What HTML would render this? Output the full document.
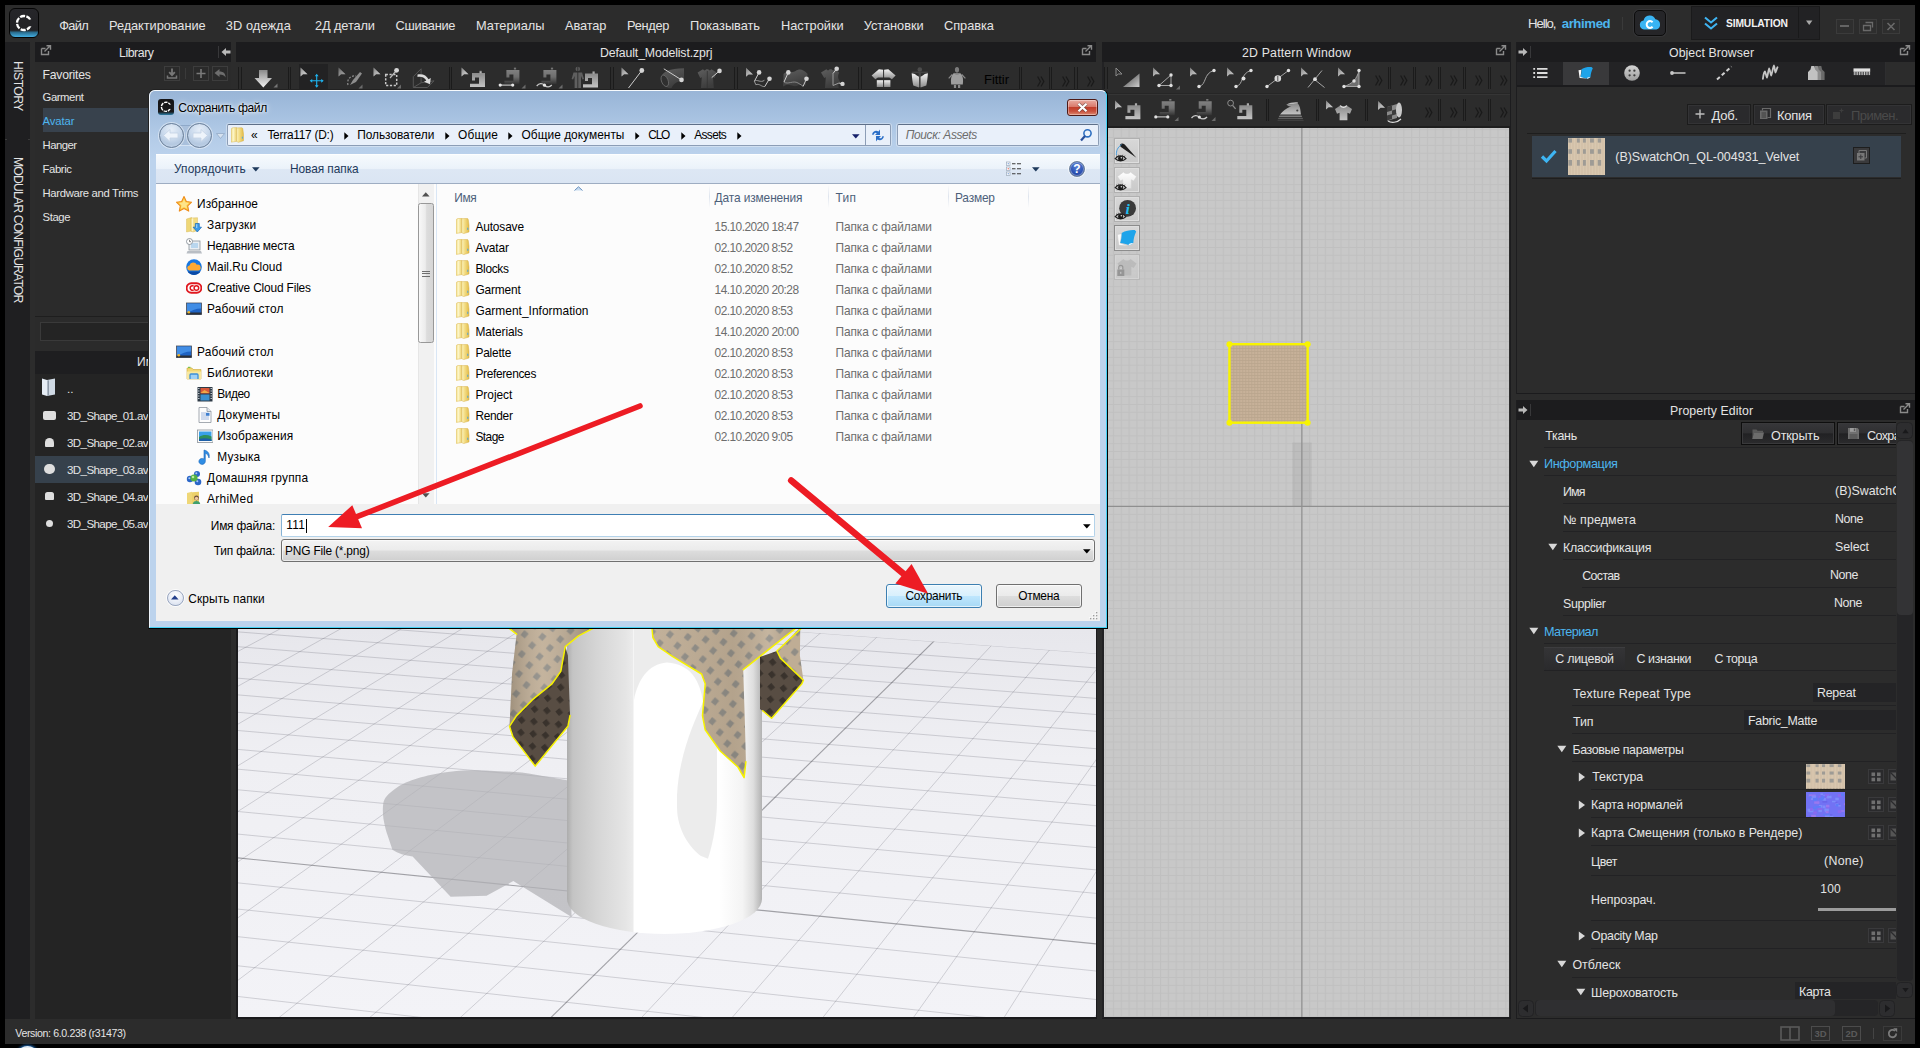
<!DOCTYPE html>
<html lang="ru"><head><meta charset="utf-8"><title>CLO - Сохранить файл</title><style>
html,body{margin:0;padding:0;background:#000;}
body{width:1920px;height:1048px;position:relative;overflow:hidden;font-family:"Liberation Sans","DejaVu Sans",sans-serif;-webkit-font-smoothing:antialiased;}
.t{position:absolute;white-space:nowrap;}
.r{position:absolute;}
svg{display:block;overflow:hidden}
</style></head>
<body>
<svg class="r" width="0" height="0" style="left:0;top:0"><defs><linearGradient id="gcur" x1="0" y1="0" x2="1" y2="1"><stop offset="0" stop-color="#000" stop-opacity="0.35"/><stop offset="0.6" stop-color="#fff" stop-opacity="0.15"/><stop offset="1" stop-color="#fff" stop-opacity="0.35"/></linearGradient><linearGradient id="gm1" x1="0" y1="0" x2="0" y2="1"><stop offset="0" stop-color="#8a8a8a"/><stop offset="1" stop-color="#c4c4c4"/></linearGradient><linearGradient id="gm2" x1="0" y1="0" x2="0" y2="1"><stop offset="0" stop-color="#808080"/><stop offset="0.5" stop-color="#6e6e6e"/><stop offset="1" stop-color="#6e6e6e" stop-opacity="0.12"/></linearGradient><linearGradient id="gdk" x1="0" y1="0" x2="0.4" y2="1"><stop offset="0" stop-color="#5e5e5e"/><stop offset="1" stop-color="#3c3c3c"/></linearGradient></defs></svg><div class="r" style="left:5px;top:5px;width:1910px;height:1039px;background:#2c2c2c;"></div><div class="r" style="left:9px;top:8px;width:28px;height:28px;border:1px solid #050505;border-radius:6px;background:linear-gradient(#26262a 0,#222225 76%,#2b6f92 84%,#43aee0 100%);"></div><svg class="r" style="left:14px;top:13px;" width="20" height="20"><circle cx="10" cy="10" r="7" fill="none" stroke="#fff" stroke-width="2.3" stroke-dasharray="5.2 1.3" stroke-dashoffset="-9.2" /><rect x="13" y="6.7" width="8" height="6.6" fill="#232326"/></svg><div class="t" style="left:59.3px;top:15.5px;height:20px;line-height:20px;font-size:12.8px;color:#e4e4e4;letter-spacing:-0.656px;">Файл</div><div class="t" style="left:109px;top:15.5px;height:20px;line-height:20px;font-size:12.8px;color:#e4e4e4;letter-spacing:-0.07px;">Редактирование</div><div class="t" style="left:225.8px;top:15.5px;height:20px;line-height:20px;font-size:12.8px;color:#e4e4e4;letter-spacing:0.081px;">3D одежда</div><div class="t" style="left:315px;top:15.5px;height:20px;line-height:20px;font-size:12.8px;color:#e4e4e4;letter-spacing:-0.121px;">2Д детали</div><div class="t" style="left:395.5px;top:15.5px;height:20px;line-height:20px;font-size:12.8px;color:#e4e4e4;letter-spacing:-0.254px;">Сшивание</div><div class="t" style="left:476px;top:15.5px;height:20px;line-height:20px;font-size:12.8px;color:#e4e4e4;letter-spacing:-0.005px;">Материалы</div><div class="t" style="left:565px;top:15.5px;height:20px;line-height:20px;font-size:12.8px;color:#e4e4e4;letter-spacing:-0.098px;">Аватар</div><div class="t" style="left:627px;top:15.5px;height:20px;line-height:20px;font-size:12.8px;color:#e4e4e4;letter-spacing:-0.274px;">Рендер</div><div class="t" style="left:690px;top:15.5px;height:20px;line-height:20px;font-size:12.8px;color:#e4e4e4;letter-spacing:-0.03px;">Показывать</div><div class="t" style="left:781px;top:15.5px;height:20px;line-height:20px;font-size:12.8px;color:#e4e4e4;letter-spacing:-0.008px;">Настройки</div><div class="t" style="left:863.7px;top:15.5px;height:20px;line-height:20px;font-size:12.8px;color:#e4e4e4;letter-spacing:-0.031px;">Установки</div><div class="t" style="left:944px;top:15.5px;height:20px;line-height:20px;font-size:12.8px;color:#e4e4e4;letter-spacing:-0.036px;">Справка</div><div class="t" style="left:1528px;top:13.5px;height:20px;line-height:20px;font-size:13.2px;color:#e4e4e4;letter-spacing:-1.05px;">Hello,</div><div class="t" style="left:1561.7px;top:13.5px;height:20px;line-height:20px;font-size:13.2px;color:#4db5ee;letter-spacing:-0.392px;font-weight:bold;">arhimed</div><div class="r" style="left:1621.5px;top:17px;width:1px;height:13px;background:#3a3a3a;"></div><div class="r" style="left:1634px;top:10px;width:30px;height:24px;border:1px solid #0c0c0c;border-radius:5px;background:#252528;box-shadow:0 0 0 1px #343436"></div><svg class="r" style="left:1638px;top:13px;" width="24" height="20"><path d="M6 16.5a4.6 4.6 0 0 1-.4-9.1 6.2 6.2 0 0 1 11.8-1.2 5.3 5.3 0 0 1 1 10.3z" fill="#39b4f3"/><path d="M14.6 9.2a3.4 3.4 0 1 0 0 4.6" fill="none" stroke="#fff" stroke-width="2"/></svg><div class="r" style="left:1691px;top:6px;width:129px;height:33.5px;border:1px solid #1a1a1b;background:#222224;box-sizing:border-box"></div><div class="r" style="left:1798px;top:7px;width:1px;height:31px;background:#19191a;"></div><svg class="r" style="left:1702px;top:14px;" width="18" height="18"><path d="M3 3.5l6 5 6-5M3 9.5l6 5 6-5" fill="none" stroke="#3fb4f2" stroke-width="2.1"/></svg><div class="t" style="left:1726px;top:13.5px;height:20px;line-height:20px;font-size:10.3px;color:#f2f2f2;letter-spacing:-0.147px;font-weight:bold;">SIMULATION</div><svg class="r" style="left:1804px;top:20px;" width="10" height="6"><path d="M2 0.5h6.4l-3.2 4.5z" fill="#a8a8a8"/></svg><div class="r" style="left:1836px;top:19px;width:16px;height:13px;border:1px solid #3b3b3b;background:#2e2e2e"></div><div class="r" style="left:1859px;top:19px;width:16px;height:13px;border:1px solid #3b3b3b;background:#2e2e2e"></div><div class="r" style="left:1882px;top:19px;width:16px;height:13px;border:1px solid #3b3b3b;background:#2e2e2e"></div><div class="r" style="left:1840px;top:25px;width:9px;height:1.6px;background:#646464;"></div><svg class="r" style="left:1862px;top:21px;" width="12" height="11"><path d="M3.5 1.5h7v5M1.5 4.5h7v5h-7z" fill="none" stroke="#6a6a6a" stroke-width="1.3"/></svg><svg class="r" style="left:1885px;top:21px;" width="12" height="11"><path d="M2.5 2l7 7M9.5 2l-7 7" fill="none" stroke="#6a6a6a" stroke-width="1.6"/></svg><div class="r" style="left:5px;top:42px;width:25px;height:977px;background:#1f1f21;"></div><div class="r" style="left:5px;top:138.5px;width:2px;height:1.5px;background:#3a3a3a;"></div><div class="r" style="left:28px;top:138.5px;width:2px;height:1.5px;background:#3a3a3a;"></div><div class="t" style="left:8px;top:61.4px;width:20px;height:52px;writing-mode:vertical-rl;line-height:20px;font-size:12.2px;color:#e4e4e4;letter-spacing:-0.548px">HISTORY</div><div class="t" style="left:8px;top:156.8px;width:20px;height:150px;writing-mode:vertical-rl;line-height:20px;font-size:12.2px;color:#e4e4e4;letter-spacing:-0.828px">MODULAR CONFIGURATOR</div><div class="r" style="left:35px;top:42px;width:196px;height:977px;background:#252525;"></div><div class="r" style="left:35px;top:42px;width:196px;height:20px;background:#1c1c1e;"></div><svg class="r" style="left:40px;top:45px;" width="12" height="11"><path d="M1.5 3.5h4M1.5 3.5v6h7v-3.5" fill="none" stroke="#8a8a8a" stroke-width="1.4"/><path d="M4.5 6.5L10 1M6.5 0.8h4v4" fill="none" stroke="#8a8a8a" stroke-width="1.4"/></svg><div class="t" style="left:119px;top:42.5px;height:20px;line-height:20px;font-size:12.3px;color:#e4e4e4;letter-spacing:-0.433px;">Library</div><div class="r" style="left:218px;top:46px;width:1px;height:12px;background:#38383a;"></div><svg class="r" style="left:221px;top:47px;" width="10" height="10"><path d="M0.5 5l4.5-4v2.4h4.5v3.2h-4.5v2.4z" fill="#b9b9b9"/></svg><div class="r" style="left:35px;top:62px;width:196px;height:254px;background:#2b2b2b;"></div><div class="r" style="left:43px;top:108px;width:188px;height:24px;background:#38424d;"></div><div class="t" style="left:42.5px;top:64.5px;height:20px;line-height:20px;font-size:12.2px;color:#e4e4e4;letter-spacing:-0.209px;">Favorites</div><div class="t" style="left:42.5px;top:86.8px;height:20px;line-height:20px;font-size:11.3px;color:#e4e4e4;letter-spacing:-0.41px;">Garment</div><div class="t" style="left:42.5px;top:111px;height:20px;line-height:20px;font-size:11.3px;color:#4db5ee;letter-spacing:-0.091px;">Avatar</div><div class="t" style="left:42.5px;top:135px;height:20px;line-height:20px;font-size:11.3px;color:#e4e4e4;letter-spacing:-0.513px;">Hanger</div><div class="t" style="left:42.5px;top:159px;height:20px;line-height:20px;font-size:11.3px;color:#e4e4e4;letter-spacing:-0.379px;">Fabric</div><div class="t" style="left:42.5px;top:183px;height:20px;line-height:20px;font-size:11.3px;color:#e4e4e4;letter-spacing:-0.337px;">Hardware and Trims</div><div class="t" style="left:42.5px;top:207px;height:20px;line-height:20px;font-size:11.3px;color:#e4e4e4;letter-spacing:-0.383px;">Stage</div><div class="r" style="left:164px;top:66px;width:16px;height:15px;border:1px solid #3d3d3d;background:#2a2a2a;box-sizing:border-box"></div><div class="r" style="left:193px;top:66px;width:16px;height:15px;border:1px solid #3d3d3d;background:#2a2a2a;box-sizing:border-box"></div><div class="r" style="left:212px;top:66px;width:16px;height:15px;border:1px solid #3d3d3d;background:#2a2a2a;box-sizing:border-box"></div><div class="r" style="left:185px;top:68px;width:1px;height:11px;background:#3a3a3a;"></div><svg class="r" style="left:164px;top:66px;" width="16" height="15"><path d="M8 2.5v6M5.2 6.2L8 9.2l2.8-3" fill="none" stroke="#777" stroke-width="1.8"/><path d="M3.5 9.5v2.6h9V9.5" fill="none" stroke="#777" stroke-width="1.5"/></svg><svg class="r" style="left:193px;top:66px;" width="16" height="15"><path d="M8 3v9M3.5 7.5h9" fill="none" stroke="#7a7a7a" stroke-width="1.6"/></svg><svg class="r" style="left:212px;top:66px;" width="16" height="15"><path d="M2.5 7l5-4v2.5c4 0 6 2 6 6-1.2-2.3-3-3-6-3V11z" fill="#6e6e6e"/></svg><div class="r" style="left:35px;top:316px;width:196px;height:1px;background:#1e1e1e;"></div><div class="r" style="left:35px;top:317px;width:196px;height:34px;background:#2b2b2b;"></div><div class="r" style="left:40px;top:322px;width:110px;height:19px;border:1px solid #3a3a3a;background:#242424;box-sizing:border-box"></div><div class="r" style="left:35px;top:351px;width:196px;height:22.5px;background:#1e1e20;"></div><div class="t" style="left:137px;top:352px;height:20px;line-height:20px;font-size:12px;color:#e4e4e4;">Им</div><div class="r" style="left:35px;top:373.5px;width:196px;height:646px;background:#242424;"></div><div class="r" style="left:35px;top:455.7px;width:196px;height:27px;background:#36414c;"></div><div class="t" style="left:67px;top:378.5px;height:20px;line-height:20px;font-size:11.6px;color:#e4e4e4;">..</div><div class="t" style="left:67px;top:406.1px;height:20px;line-height:20px;font-size:11.6px;color:#e4e4e4;letter-spacing:-0.62px;">3D_Shape_01.av</div><div class="t" style="left:67px;top:433.1px;height:20px;line-height:20px;font-size:11.6px;color:#e4e4e4;letter-spacing:-0.62px;">3D_Shape_02.av</div><div class="t" style="left:67px;top:460.1px;height:20px;line-height:20px;font-size:11.6px;color:#e4e4e4;letter-spacing:-0.62px;">3D_Shape_03.av</div><div class="t" style="left:67px;top:487.1px;height:20px;line-height:20px;font-size:11.6px;color:#e4e4e4;letter-spacing:-0.62px;">3D_Shape_04.av</div><div class="t" style="left:67px;top:514.1px;height:20px;line-height:20px;font-size:11.6px;color:#e4e4e4;letter-spacing:-0.62px;">3D_Shape_05.av</div><svg class="r" style="left:41px;top:377px;" width="18" height="22"><path d="M1 1.5l5 1.5v16L1 17.5z" fill="#e6edf5"/><path d="M6 3L14 1.5v16L6 19z" fill="#cfd9e4"/><path d="M6.5 3.5l1.5-.300v15.3l-1.5.400z" fill="#8e9aa8"/></svg><div class="r" style="left:43px;top:410.5px;width:12.5px;height:9.5px;background:#dedede;border-radius:2px"></div><div class="r" style="left:44.5px;top:437.5px;width:9.5px;height:9px;background:#dedede;border-radius:4.5px 4.5px 1px 1px"></div><div class="r" style="left:44px;top:463.5px;width:10.5px;height:10.5px;background:#dedede;border-radius:6px"></div><div class="r" style="left:44.5px;top:491.5px;width:9.5px;height:8.5px;background:#dedede;border-radius:2.5px 2.5px 1px 1px"></div><div class="r" style="left:45.5px;top:520px;width:7px;height:7px;background:#dedede;border-radius:4px"></div><div class="r" style="left:5px;top:1019px;width:1910px;height:25px;background:#2c2c2c;"></div><div class="t" style="left:15.3px;top:1022.5px;height:20px;line-height:20px;font-size:10.6px;color:#e4e4e4;letter-spacing:-0.368px;">Version: 6.0.238 (r31473)</div><div class="r" style="left:18.5px;top:1045.6px;width:17.5px;height:12px;border-radius:9px / 6px;background:#e3ebf2;box-shadow:0 0 2.5px 1px #1f6ab4"></div><svg class="r" style="left:1780px;top:1026px;" width="20" height="15"><rect x="1" y="1" width="18" height="13" fill="none" stroke="#5a5a5a" stroke-width="1.6"/><path d="M10 1v13" stroke="#5a5a5a" stroke-width="1.6"/></svg><div class="r" style="left:1811px;top:1026px;width:19px;height:15px;border:1.5px solid #4c4c4c;box-sizing:border-box"></div><div class="t" style="left:1814.4px;top:1023.6px;height:20px;line-height:20px;font-size:9.5px;color:#5a5a5a;font-weight:bold;">3D</div><div class="r" style="left:1842px;top:1026px;width:19px;height:15px;border:1.5px solid #4c4c4c;box-sizing:border-box"></div><div class="t" style="left:1845.4px;top:1023.6px;height:20px;line-height:20px;font-size:9.5px;color:#5a5a5a;font-weight:bold;">2D</div><div class="r" style="left:1872.5px;top:1028px;width:1px;height:11px;background:#444;"></div><div class="r" style="left:1883px;top:1026px;width:19px;height:15px;border:1px solid #3b3b3b;box-sizing:border-box;background:#2a2a2a"></div><svg class="r" style="left:1886px;top:1027px;" width="13" height="13"><path d="M10.2 6.5a3.7 3.7 0 1 1-1.2-2.7" fill="none" stroke="#7c7c7c" stroke-width="1.8"/><path d="M7.2 1.2h4v4z" fill="#7c7c7c"/></svg><div class="r" style="left:236px;top:42px;width:860px;height:20px;background:#1c1c1e;"></div><div class="t" style="left:600px;top:42.5px;height:20px;line-height:20px;font-size:12.3px;color:#e4e4e4;letter-spacing:-0.118px;">Default_Modelist.zprj</div><svg class="r" style="left:1081px;top:45px;" width="12" height="11"><path d="M1.5 3.5h4M1.5 3.5v6h7v-3.5" fill="none" stroke="#8a8a8a" stroke-width="1.4"/><path d="M4.5 6.5L10 1M6.5 0.8h4v4" fill="none" stroke="#8a8a8a" stroke-width="1.4"/></svg><div class="r" style="left:236px;top:62px;width:860px;height:30px;background:#2c2c2c;"></div><div class="r" style="left:238.3px;top:67px;width:1.1px;height:22px;background:#1b1b1b;"></div><div class="r" style="left:240.60000000000002px;top:67px;width:1.1px;height:22px;background:#1b1b1b;"></div><svg class="r" style="left:252px;top:66px;" width="28" height="24"><defs><linearGradient id="ga" x1="0" y1="0" x2="0" y2="1"><stop offset="0" stop-color="#8a8a8a"/><stop offset="1" stop-color="#f4f4f4"/></linearGradient></defs><path d="M7 4h8.5v8h4.5l-8.7 9.5L2.5 12H7z" fill="url(#ga)"/><path d="M25.5 17.5v4h-4z" fill="#777"/></svg><div class="r" style="left:287.8px;top:67px;width:1.1px;height:22px;background:#1b1b1b;"></div><div class="r" style="left:290.1px;top:67px;width:1.1px;height:22px;background:#1b1b1b;"></div><div class="r" style="left:298.5px;top:64px;width:29px;height:26px;background:#222223;"></div><svg class="r" style="left:298px;top:64px;" width="30" height="26"><path d="M2.5 3.5l0 9 2.6-2.2 4.4 0z" fill="#b5b5b5"/><path d="M2.5 3.5l0 9 2.6-2.2 4.4 0z" fill="url(#gcur)"/><path d="M18.7 11v11.6M12.9 16.8h11.6" stroke="#1eb4f0" stroke-width="1.1"/><path d="M18.7 9.8l1.9 2.5h-3.8zM18.7 23.8l1.9-2.5h-3.8zM11.7 16.8l2.5-1.9v3.8zM25.7 16.8l-2.5-1.9v3.8z" fill="#1eb4f0"/></svg><svg class="r" style="left:336px;top:64px;" width="30" height="26"><path d="M2.5 3.5l0 9 2.6-2.2 4.4 0z" fill="#7d7d7d"/><path d="M2.5 3.5l0 9 2.6-2.2 4.4 0z" fill="url(#gcur)"/><path d="M12 21c-1.5-6 3-10 8-9" fill="none" stroke="#8a8a8a" stroke-width="1.3" stroke-dasharray="2 1.5"/><path d="M14 21l3-5 7-8 2 1.5-6 8.5z" fill="#8d8d8d"/><path d="M26.5 20.5v4h-4z" fill="#6a6a6a"/></svg><svg class="r" style="left:371px;top:64px;" width="32" height="26"><path d="M2.5 3.5l0 9 2.6-2.2 4.4 0z" fill="#a8a8a8"/><path d="M2.5 3.5l0 9 2.6-2.2 4.4 0z" fill="url(#gcur)"/><rect x="14.7" y="10.5" width="11" height="11" fill="none" stroke="#c9c9c9" stroke-width="1.5" stroke-dasharray="2.2 1.6"/><path d="M19 14l6-7" stroke="#bbb" stroke-width="1.2"/><circle cx="25.6" cy="6.3" r="2.4" fill="#d8d8d8"/><path d="M30 20.5v4h-4z" fill="#6a6a6a"/></svg><svg class="r" style="left:411px;top:64px;" width="28" height="26"><path d="M10.1 4.8L2.3 12.6V23.5H16.3L23.1 16.8M10.1 4.8V18.8L23.1 16.8M10.1 18.8L2.3 23.5" fill="none" stroke="#565656" stroke-width="1"/><path d="M6.5 10.5c5-1.2 9 .800 11 4.8l2.3-1.2-.800 6.2-6-2.6 2.3-1.2c-1.5-2.8-4.5-4.2-8.8-3.5z" fill="#dcdcdc"/></svg><div class="r" style="left:448.7px;top:67px;width:1.1px;height:22px;background:#1b1b1b;"></div><div class="r" style="left:451px;top:67px;width:1.1px;height:22px;background:#1b1b1b;"></div><svg class="r" style="left:459px;top:64px;" width="30" height="26"><path d="M2.5 3.5l0 9 2.6-2.2 4.4 0z" fill="#b0b0b0"/><path d="M2.5 3.5l0 9 2.6-2.2 4.4 0z" fill="url(#gcur)"/><path d="M13 9h13v14h-15v-3.2h9v-6.3h-4v3h-3z" fill="url(#gm1)"/><rect x="20.5" y="6.8" width="2.2" height="2.4" fill="url(#gm1)"/></svg><svg class="r" style="left:497px;top:64px;" width="32" height="26"><path d="M9.4 5.9h13v14h-15v-3.2h9v-6.3h-4v3h-3z" fill="url(#gm2)"/><rect x="16.9" y="3.7" width="2.2" height="2.4" fill="url(#gm2)"/><path d="M3.2 21.1h12.5" stroke="#cfcfcf" stroke-width="1.1"/><circle cx="3.2" cy="21.1" r="1.6" fill="#e6e6e6"/><circle cx="15.7" cy="21.1" r="1.6" fill="#e6e6e6"/><path d="M28.5 20.5v4h-4z" fill="#6a6a6a"/></svg><svg class="r" style="left:534px;top:64px;" width="32" height="26"><path d="M9.4 5.9h13v14h-15v-3.2h9v-6.3h-4v3h-3z" fill="url(#gm2)"/><rect x="16.9" y="3.7" width="2.2" height="2.4" fill="url(#gm2)"/><path d="M2.7 22c2.5-3 5.5-3 7.8-.800s5 2.5 7.3-.200" fill="none" stroke="#c9c9c9" stroke-width="1.2"/><circle cx="10.5" cy="21.2" r="1.6" fill="#e6e6e6"/><path d="M28.5 20.5v4h-4z" fill="#6a6a6a"/></svg><svg class="r" style="left:570px;top:64px;" width="32" height="26"><circle cx="7.8" cy="5" r="2.3" fill="#5c5c5c"/><path d="M3.5 8.5h8.6l1.9 6.5-1.5.600-1.5-3.6v12h-6.4v-12l-1.5 3.6-1.5-.600z" fill="#5f5f5f"/><path d="M7.8 2.5v22" stroke="#2c2c2c" stroke-width="0.9"/><path d="M15 9.5h13v14h-15v-3.2h9v-6.3h-4v3h-3z" fill="url(#gm1)"/><rect x="22.5" y="7.3" width="2.2" height="2.4" fill="url(#gm1)"/></svg><div class="r" style="left:610.3px;top:67px;width:1.1px;height:22px;background:#1b1b1b;"></div><div class="r" style="left:612.5999999999999px;top:67px;width:1.1px;height:22px;background:#1b1b1b;"></div><svg class="r" style="left:619px;top:64px;" width="30" height="26"><path d="M2.5 3.5l0 9 2.6-2.2 4.4 0z" fill="#a8a8a8"/><path d="M2.5 3.5l0 9 2.6-2.2 4.4 0z" fill="url(#gcur)"/><path d="M9.5 24L22.8 6.5" stroke="#cdcdcd" stroke-width="1"/><circle cx="22.8" cy="6.5" r="2.4" fill="#d4d4d4"/></svg><svg class="r" style="left:658px;top:64px;" width="30" height="26"><path d="M3 13c2-5 8-8.5 23-8.7v12.5c-6 .200-10 2-12.5 7.2-4 1-11.5-3.5-10.5-11z" fill="url(#gdk)"/><ellipse cx="6.8" cy="16.8" rx="3.3" ry="6" fill="#2f2f2f" stroke="#6a6a6a" stroke-width="0.8" transform="rotate(-22 6.8 16.8)"/><path d="M5.8 4.8L23.5 15.9" stroke="#cdcdcd" stroke-width="1"/><circle cx="23.5" cy="15.9" r="2.3" fill="#d4d4d4"/></svg><svg class="r" style="left:696px;top:64px;" width="30" height="26"><path d="M1.6 8.5l5.4-3.2c.800 1.5 2.4 1.5 3.2 0h2c.800 1.5 2.4 1.5 3.2 0l5.4 3.2-2.2 5.5-1.6-.800 .800 10.8H5l.800-10.8-1.6 .800z" fill="url(#gdk)"/><path d="M11.3 7v17" stroke="#333" stroke-width="0.8"/><path d="M15.7 13.6L23.5 6.9" stroke="#cdcdcd" stroke-width="1"/><circle cx="23.5" cy="6.9" r="2.3" fill="#d4d4d4"/></svg><div class="r" style="left:734.2px;top:67px;width:1.1px;height:22px;background:#1b1b1b;"></div><div class="r" style="left:736.5px;top:67px;width:1.1px;height:22px;background:#1b1b1b;"></div><svg class="r" style="left:743px;top:64px;" width="32" height="26"><path d="M3 3.7l0 9 2.6-2.2 4.4 0z" fill="#a8a8a8"/><path d="M3 3.7l0 9 2.6-2.2 4.4 0z" fill="url(#gcur)"/><path d="M11.4 17.3c3-2.5 6 2 10-1M11.4 17.3l1.5 3.5c3-2 6 2.5 8.9 1.7" fill="none" stroke="#9a9a9a" stroke-width="1"/><path d="M11.4 17.3L16.1 8.4" stroke="#cdcdcd" stroke-width="1"/><circle cx="16.1" cy="8.4" r="2.3" fill="#d4d4d4"/><path d="M21.8 22.5L26.5 14.7" stroke="#cdcdcd" stroke-width="1"/><circle cx="26.5" cy="14.7" r="2.3" fill="#d4d4d4"/></svg><svg class="r" style="left:781px;top:64px;" width="32" height="26"><path d="M2.6 10c4-5 8 0 12-3s8-1.5 12 3l-2 12c-4-4-8 1-12 0s-6-2.5-10.5 .500z" fill="url(#gdk)"/><path d="M3 18c4 3 9-2 14 1l5 3" fill="none" stroke="#8c8c8c" stroke-width="0.9"/><path d="M3 18L7.3 8.4" stroke="#cdcdcd" stroke-width="1"/><circle cx="7.3" cy="8.4" r="2.3" fill="#d4d4d4"/><path d="M22 22.5L25.5 14.7" stroke="#cdcdcd" stroke-width="1"/><circle cx="25.5" cy="14.7" r="2.3" fill="#d4d4d4"/></svg><svg class="r" style="left:820px;top:64px;" width="30" height="26"><path d="M1 8.5l5.4-3.2c.800 1.5 2.4 1.5 3.2 0h2c.800 1.5 2.4 1.5 3.2 0l4.4 3.2c-2 4-1 7 1 9-2 2-2 4-1.5 6.5H5l.800-10.8-1.6 .800z" fill="url(#gdk)"/><path d="M13 9.5v12l6-2.5" fill="none" stroke="#9a9a9a" stroke-width="1"/><path d="M13 9.5L16.7 4.8" stroke="#cdcdcd" stroke-width="1"/><circle cx="16.7" cy="4.8" r="2.3" fill="#d4d4d4"/><path d="M19 19L22.5 19.9" stroke="#cdcdcd" stroke-width="1"/><circle cx="22.5" cy="19.9" r="2.2" fill="#d4d4d4"/></svg><div class="r" style="left:858.3px;top:67px;width:1.1px;height:22px;background:#1b1b1b;"></div><div class="r" style="left:860.5999999999999px;top:67px;width:1.1px;height:22px;background:#1b1b1b;"></div><svg class="r" style="left:869px;top:64px;" width="30" height="26"><defs><linearGradient id="gb" x1="0" y1="0" x2="0" y2="1"><stop offset="0" stop-color="#f4f4f4"/><stop offset="1" stop-color="#8a8a8a"/></linearGradient></defs><path d="M2.6 11.5L9.9 5.3L14.1 5.8V13.6H8.9L6.3 15.2z" fill="url(#gb)"/><path d="M26.6 11.5L19.3 5.3L15.1 5.8V13.6H20.3L22.9 15.2z" fill="url(#gb)"/><rect x="7.8" y="16.2" width="6.3" height="6.8" fill="url(#gb)"/><rect x="15.1" y="16.2" width="6.3" height="6.8" fill="url(#gb)"/></svg><svg class="r" style="left:909px;top:64px;" width="24" height="26"><circle cx="10.8" cy="5.5" r="2.3" fill="#4c4c4c"/><path d="M2.7 8.4h16.2" stroke="#444" stroke-width="1.6"/><path d="M10.8 8v15" stroke="#444" stroke-width="2.4"/><path d="M2.7 9.3C3 14 3.5 18 4.3 21.4L10 23.5V12.8C8.5 12.2 7 11.2 5.8 10z" fill="url(#gb)"/><path d="M18.9 9.3C18.6 14 18.1 18 17.3 21.4L11.6 23.5V12.8C13.1 12.2 14.6 11.2 15.8 10z" fill="url(#gb)"/></svg><svg class="r" style="left:946px;top:64px;" width="24" height="26"><ellipse cx="11" cy="5.8" rx="2.1" ry="2.8" fill="#7c7c7c"/><path d="M6.3 10.5L2.7 14.3M15.7 10.5L19.4 14.3" stroke="#8a8a8a" stroke-width="1.2"/><path d="M7.5 9.2h7c2.5 2.5 3 6.5 2.3 11.2h-11.6c-.700-4.7-.200-8.7 2.3-11.2z" fill="#9e9e9e"/><path d="M8.5 9.2c1.2 1.5 3.8 1.5 5 0" fill="none" stroke="#7a7a7a" stroke-width="0.8"/><rect x="7.9" y="20.9" width="2.2" height="3.1" fill="#8a8a8a"/><rect x="12" y="20.9" width="2.2" height="3.1" fill="#8a8a8a"/></svg><div class="t" style="left:984px;top:69.5px;height:20px;line-height:20px;font-size:13px;color:#000;letter-spacing:-0.054px;">Fittir</div><div class="r" style="left:1019.1px;top:67px;width:1.1px;height:22px;background:#1b1b1b;"></div><div class="r" style="left:1021.4px;top:67px;width:1.1px;height:22px;background:#1b1b1b;"></div><svg class="r" style="left:1036.7px;top:75.5px;" width="8" height="11"><path d="M0.6 0.5L3.4 5.5L0.6 10.5M4 0.5L6.8 5.5L4 10.5" fill="none" stroke="#1a1a1a" stroke-width="1.3"/></svg><div class="r" style="left:1049.1px;top:67px;width:1.1px;height:22px;background:#1b1b1b;"></div><div class="r" style="left:1051.3999999999999px;top:67px;width:1.1px;height:22px;background:#1b1b1b;"></div><svg class="r" style="left:1061.7px;top:75.5px;" width="8" height="11"><path d="M0.6 0.5L3.4 5.5L0.6 10.5M4 0.5L6.8 5.5L4 10.5" fill="none" stroke="#1a1a1a" stroke-width="1.3"/></svg><div class="r" style="left:1074.2px;top:67px;width:1.1px;height:22px;background:#1b1b1b;"></div><div class="r" style="left:1076.5px;top:67px;width:1.1px;height:22px;background:#1b1b1b;"></div><svg class="r" style="left:1086.7px;top:75.5px;" width="8" height="11"><path d="M0.6 0.5L3.4 5.5L0.6 10.5M4 0.5L6.8 5.5L4 10.5" fill="none" stroke="#1a1a1a" stroke-width="1.3"/></svg><div class="r" style="left:236px;top:92px;width:861px;height:926.5px;background:#1b1b1d;"></div><svg class="r" style="left:238px;top:92px" width="857.5" height="925" viewBox="238 92 857.5 925"><defs><linearGradient id="vbg" x1="0" y1="0" x2="0" y2="1"><stop offset="0" stop-color="#dedee4"/><stop offset="0.58" stop-color="#e7e7ec"/><stop offset="0.72" stop-color="#efeff3"/><stop offset="1" stop-color="#f3f3f7"/></linearGradient><clipPath id="gclip"><path d="M238 590.5L1096 653.4V1018H238z"/></clipPath><linearGradient id="cyl" x1="0" y1="0" x2="1" y2="0"><stop offset="0" stop-color="#adadad"/><stop offset="0.03" stop-color="#c4c4c4"/><stop offset="0.15" stop-color="#d5d5d5"/><stop offset="0.3" stop-color="#e5e5e5"/><stop offset="0.336" stop-color="#ebebeb"/><stop offset="0.346" stop-color="#ffffff"/><stop offset="0.78" stop-color="#ffffff"/><stop offset="0.9" stop-color="#f4f4f4"/><stop offset="0.955" stop-color="#dedede"/><stop offset="1" stop-color="#b2b2b2"/></linearGradient><pattern id="cl1" width="18" height="20" patternUnits="userSpaceOnUse" patternTransform="rotate(8)"><rect width="18" height="20" fill="#bfad95"/><rect x="2" y="2" width="5.6" height="6.2" fill="#908d86" transform="rotate(32 4.8 5)"/><rect x="11" y="12" width="5.6" height="6.2" fill="#908d86" transform="rotate(32 13.8 15)"/></pattern><pattern id="cl2" width="17" height="18" patternUnits="userSpaceOnUse" patternTransform="rotate(-40)"><rect width="17" height="18" fill="#584d43"/><rect x="2" y="2" width="5.4" height="5.8" fill="#39322c"/><rect x="10.5" y="11" width="5.4" height="5.8" fill="#39322c"/></pattern><linearGradient id="clsh" x1="0" y1="0" x2="1" y2="0"><stop offset="0" stop-color="#000" stop-opacity="0.18"/><stop offset="0.4" stop-color="#fff" stop-opacity="0.08"/><stop offset="1" stop-color="#000" stop-opacity="0.22"/></linearGradient><linearGradient id="clsh2" x1="0" y1="0" x2="1" y2="0"><stop offset="0" stop-color="#fff" stop-opacity="0.05"/><stop offset="0.55" stop-color="#000" stop-opacity="0.06"/><stop offset="0.8" stop-color="#fff" stop-opacity="0.1"/><stop offset="1" stop-color="#000" stop-opacity="0.12"/></linearGradient></defs><rect x="238" y="92" width="858" height="926" fill="url(#vbg)"/><g clip-path="url(#gclip)"><line x1="238" y1="590.5" x2="1096" y2="653.4" stroke="rgba(70,70,85,0.21)" stroke-width="1"/><line x1="238" y1="603.8" x2="1096" y2="667.9" stroke="rgba(70,70,85,0.21)" stroke-width="1"/><line x1="238" y1="617.6" x2="1096" y2="682.8" stroke="rgba(70,70,85,0.21)" stroke-width="1"/><line x1="238" y1="631.9" x2="1096" y2="698.4" stroke="rgba(70,70,85,0.21)" stroke-width="1"/><line x1="238" y1="646.7" x2="1096" y2="714.5" stroke="rgba(70,70,85,0.21)" stroke-width="1"/><line x1="238" y1="662.1" x2="1096" y2="731.3" stroke="rgba(70,70,85,0.21)" stroke-width="1"/><line x1="238" y1="678.2" x2="1096" y2="748.7" stroke="rgba(70,70,85,0.21)" stroke-width="1"/><line x1="238" y1="694.9" x2="1096" y2="766.8" stroke="rgba(70,70,85,0.21)" stroke-width="1"/><line x1="238" y1="712.3" x2="1096" y2="785.7" stroke="rgba(70,70,85,0.21)" stroke-width="1"/><line x1="238" y1="730.5" x2="1096" y2="805.5" stroke="rgba(70,70,85,0.21)" stroke-width="1"/><line x1="238" y1="749.4" x2="1096" y2="826" stroke="rgba(70,70,85,0.21)" stroke-width="1"/><line x1="238" y1="769.2" x2="1096" y2="847.5" stroke="rgba(70,70,85,0.21)" stroke-width="1"/><line x1="238" y1="789.8" x2="1096" y2="869.9" stroke="rgba(70,70,85,0.21)" stroke-width="1"/><line x1="238" y1="811.5" x2="1096" y2="893.4" stroke="rgba(70,70,85,0.21)" stroke-width="1"/><line x1="238" y1="834.1" x2="1096" y2="918.1" stroke="rgba(70,70,85,0.21)" stroke-width="1"/><line x1="238" y1="857.9" x2="1096" y2="943.9" stroke="rgba(40,40,48,0.4)" stroke-width="1.1"/><line x1="238" y1="882.9" x2="1096" y2="971" stroke="rgba(70,70,85,0.21)" stroke-width="1"/><line x1="238" y1="909.1" x2="1096" y2="999.5" stroke="rgba(70,70,85,0.21)" stroke-width="1"/><line x1="238" y1="936.7" x2="1096" y2="1029.4" stroke="rgba(70,70,85,0.21)" stroke-width="1"/><line x1="238" y1="965.8" x2="1096" y2="1061.1" stroke="rgba(70,70,85,0.21)" stroke-width="1"/><line x1="238" y1="996.5" x2="1096" y2="1094.4" stroke="rgba(70,70,85,0.21)" stroke-width="1"/><line x1="238" y1="1029" x2="1096" y2="1129.7" stroke="rgba(70,70,85,0.21)" stroke-width="1"/><line x1="298.1" y1="560" x2="-632.1" y2="1020" stroke="rgba(70,70,85,0.21)" stroke-width="1"/><line x1="353.4" y1="560" x2="-541.3" y2="1020" stroke="rgba(70,70,85,0.21)" stroke-width="1"/><line x1="408.7" y1="560" x2="-450.5" y2="1020" stroke="rgba(70,70,85,0.21)" stroke-width="1"/><line x1="463.9" y1="560" x2="-359.7" y2="1020" stroke="rgba(70,70,85,0.21)" stroke-width="1"/><line x1="519.2" y1="560" x2="-268.9" y2="1020" stroke="rgba(70,70,85,0.21)" stroke-width="1"/><line x1="574.5" y1="560" x2="-178" y2="1020" stroke="rgba(70,70,85,0.21)" stroke-width="1"/><line x1="629.7" y1="560" x2="-87.2" y2="1020" stroke="rgba(70,70,85,0.21)" stroke-width="1"/><line x1="685" y1="560" x2="3.6" y2="1020" stroke="rgba(70,70,85,0.21)" stroke-width="1"/><line x1="740.3" y1="560" x2="94.4" y2="1020" stroke="rgba(70,70,85,0.21)" stroke-width="1"/><line x1="795.6" y1="560" x2="185.2" y2="1020" stroke="rgba(70,70,85,0.21)" stroke-width="1"/><line x1="850.8" y1="560" x2="276" y2="1020" stroke="rgba(70,70,85,0.21)" stroke-width="1"/><line x1="906.1" y1="560" x2="366.8" y2="1020" stroke="rgba(70,70,85,0.21)" stroke-width="1"/><line x1="961.4" y1="560" x2="457.6" y2="1020" stroke="rgba(70,70,85,0.21)" stroke-width="1"/><line x1="1016.6" y1="560" x2="548.4" y2="1020" stroke="rgba(40,40,48,0.4)" stroke-width="1.1"/><line x1="1071.9" y1="560" x2="639.2" y2="1020" stroke="rgba(70,70,85,0.21)" stroke-width="1"/><line x1="1127.2" y1="560" x2="730" y2="1020" stroke="rgba(70,70,85,0.21)" stroke-width="1"/><line x1="1182.4" y1="560" x2="820.9" y2="1020" stroke="rgba(70,70,85,0.21)" stroke-width="1"/><line x1="1237.7" y1="560" x2="911.7" y2="1020" stroke="rgba(70,70,85,0.21)" stroke-width="1"/><line x1="1293" y1="560" x2="1002.5" y2="1020" stroke="rgba(70,70,85,0.21)" stroke-width="1"/><line x1="1348.2" y1="560" x2="1093.3" y2="1020" stroke="rgba(70,70,85,0.21)" stroke-width="1"/><line x1="1403.5" y1="560" x2="1184.1" y2="1020" stroke="rgba(70,70,85,0.21)" stroke-width="1"/><line x1="1458.8" y1="560" x2="1274.9" y2="1020" stroke="rgba(70,70,85,0.21)" stroke-width="1"/></g><path d="M567 780.3L535.7 774.7C525 772.5 515 771.8 504.4 771.4C490 770.5 480 770.2 470.8 770.2C460 770.5 452 771.2 443.9 772.5C432 774.5 423 776.5 414.8 779.2C406 782 400 785 394.6 789.3C388 794 384.5 798 383.4 802.7C382.5 808 382.8 813 383.4 818.4C384.5 825 386 831 387.9 836.3L392.4 849.7C398 853.5 405 855.5 412.6 856.5L450.6 896.8L486.5 895.7L513.3 881.1L571.6 916.9z" fill="rgba(178,178,183,0.73)"/><path d="M567 92V899A97.5 35 0 0 0 762 899V92z" fill="url(#cyl)"/><path d="M634 92H717V800C717 820 714 840 708 858.7L701 856C690 848 677 830 677 807V795C679 755 694 722 703 702C700 680 690 664 667 662.5C648 664 638 680 634 700z" fill="#000" opacity="0.075"/><polygon points="508.6,627.1 593.6,627.1 578.5,635.9 565.3,646.6 560.8,671.4 552,683.8 532.5,699.7 516.6,715.6 509.5,726.3 512.1,673.1 516.6,634.2" fill="url(#cl1)"/><polygon points="508.6,627.1 593.6,627.1 578.5,635.9 565.3,646.6 560.8,671.4 552,683.8 532.5,699.7 516.6,715.6 509.5,726.3 512.1,673.1 516.6,634.2" fill="url(#clsh)"/><polygon points="565.3,646.6 560.8,671.4 552,683.8 532.5,699.7 516.6,715.6 509.5,726.3 513,736.9 535.2,766.1 567.9,726.3 570,715.6 567.9,655.4" fill="url(#cl2)"/><polyline points="593.6,628 578.5,635.9 565.3,646.6 560.8,671.4 552,683.8 532.5,699.7 516.6,715.6 509.5,726.3 513,736.9 535.2,766.1 567.9,726.3 570,715.6" fill="none" stroke="#f6f200" stroke-width="1.5" stroke-linejoin="round" stroke-linecap="round"/><polyline points="508.6,628 516.6,634.2" fill="none" stroke="#f6f200" stroke-width="1.5" stroke-linejoin="round" stroke-linecap="round"/><polygon points="652,627.1 652.9,637.7 658.2,646.6 672.4,656.3 701.6,674 705.2,683.8 702.5,715.6 705.2,729.8 720.2,751 737.9,767 744.1,777.6 745.9,761.7 745,726.3 743.2,669.6 797.2,627.1" fill="url(#cl1)"/><polygon points="652,627.1 652.9,637.7 658.2,646.6 672.4,656.3 701.6,674 705.2,683.8 702.5,715.6 705.2,729.8 720.2,751 737.9,767 744.1,777.6 745.9,761.7 745,726.3 743.2,669.6 797.2,627.1" fill="url(#clsh2)"/><polyline points="652,628 652.9,637.7 658.2,646.6 672.4,656.3 701.6,674 705.2,683.8 702.5,715.6 705.2,729.8 720.2,751 737.9,767 744.1,777.6 745.9,761.7" fill="none" stroke="#f6f200" stroke-width="1.5" stroke-linejoin="round" stroke-linecap="round"/><polyline points="743.2,669.6 794.9,628.9" fill="none" stroke="#f6f200" stroke-width="1.5" stroke-linejoin="round" stroke-linecap="round"/><polygon points="760,657 776.9,651 780.4,658.1 803.4,680.2 801.7,684.1 771.6,718.3 760,709" fill="url(#cl2)"/><polygon points="800.8,627.1 776.9,651 780.4,658.1 803.4,680.2 799.9,655.4 800.3,627.1" fill="url(#cl1)"/><polyline points="801.1,628.5 776.9,651 780.4,658.1 803.4,680.2 801.7,684.1 771.6,718.3 762.7,710.7" fill="none" stroke="#f6f200" stroke-width="1.5" stroke-linejoin="round" stroke-linecap="round"/></svg><div class="r" style="left:1102px;top:42px;width:409px;height:20px;background:#1c1c1e;"></div><div class="t" style="left:1242px;top:42.5px;height:20px;line-height:20px;font-size:12.3px;color:#e4e4e4;letter-spacing:0.19px;">2D Pattern Window</div><svg class="r" style="left:1495px;top:45px;" width="12" height="11"><path d="M1.5 3.5h4M1.5 3.5v6h7v-3.5" fill="none" stroke="#8a8a8a" stroke-width="1.4"/><path d="M4.5 6.5L10 1M6.5 0.8h4v4" fill="none" stroke="#8a8a8a" stroke-width="1.4"/></svg><div class="r" style="left:1102px;top:62px;width:409px;height:31px;background:#2c2c2c;"></div><div class="r" style="left:1102px;top:93px;width:409px;height:1px;background:#262626;"></div><div class="r" style="left:1102px;top:94px;width:409px;height:1px;background:#353535;"></div><div class="r" style="left:1102px;top:95px;width:409px;height:31px;background:#2c2c2c;"></div><div class="r" style="left:1102px;top:126px;width:409px;height:2px;background:#1e1e1e;"></div><div class="r" style="left:1104.4px;top:67px;width:1.1px;height:22px;background:#1b1b1b;"></div><div class="r" style="left:1106.7px;top:67px;width:1.1px;height:22px;background:#1b1b1b;"></div><svg class="r" style="left:1112px;top:64px;" width="30" height="27"><path d="M4 4v8l2.3-2 3.7 0z" fill="none" stroke="#8a8a8a" stroke-width="1"/><defs><linearGradient id="gt" x1="0" y1="0" x2="1" y2="1"><stop offset="0.3" stop-color="#6a6a6a"/><stop offset="1" stop-color="#cfcfcf"/></linearGradient></defs><path d="M11 23h16.5V9.5z" fill="url(#gt)"/></svg><svg class="r" style="left:1150px;top:64px;" width="32" height="27"><path d="M3 3.5l0 9 2.6-2.2 4.4 0z" fill="#a8a8a8"/><path d="M3 3.5l0 9 2.6-2.2 4.4 0z" fill="url(#gcur)"/><path d="M9 21.5h12V11z" fill="none" stroke="#a4a4a4" stroke-width="1"/><circle cx="9" cy="21.5" r="1.7" fill="#e0e0e0"/><circle cx="21" cy="21.5" r="1.7" fill="#e0e0e0"/><circle cx="21" cy="11" r="1.7" fill="#e0e0e0"/><path d="M30 21.5v4h-4z" fill="#6a6a6a"/></svg><svg class="r" style="left:1187px;top:64px;" width="32" height="27"><path d="M3 3.5l0 9 2.6-2.2 4.4 0z" fill="#a8a8a8"/><path d="M3 3.5l0 9 2.6-2.2 4.4 0z" fill="url(#gcur)"/><path d="M12 22.5c8-2 4-13 15-16" fill="none" stroke="#a4a4a4" stroke-width="1"/><circle cx="12" cy="22.5" r="1.7" fill="#e0e0e0"/><circle cx="27" cy="6.5" r="1.7" fill="#e0e0e0"/></svg><svg class="r" style="left:1224px;top:64px;" width="32" height="27"><path d="M3 3.5l0 9 2.6-2.2 4.4 0z" fill="#a8a8a8"/><path d="M3 3.5l0 9 2.6-2.2 4.4 0z" fill="url(#gcur)"/><path d="M12 22.5c8-2 4-13 15-16" fill="none" stroke="#a4a4a4" stroke-width="1"/><circle cx="12" cy="22.5" r="1.7" fill="#e0e0e0"/><circle cx="27" cy="6.5" r="1.7" fill="#e0e0e0"/><circle cx="19.5" cy="14.5" r="2" fill="#e0e0e0"/></svg><svg class="r" style="left:1262px;top:64px;" width="32" height="27"><path d="M5 22.5L26.5 6.5" stroke="#a4a4a4" stroke-width="1"/><circle cx="5" cy="22.5" r="1.7" fill="#e0e0e0"/><circle cx="26.5" cy="6.5" r="1.7" fill="#e0e0e0"/><circle cx="15.8" cy="14.5" r="3.3" fill="#d8d8d8"/><path d="M15.8 12v5" stroke="#555" stroke-width="1"/></svg><svg class="r" style="left:1298px;top:64px;" width="32" height="27"><path d="M3 3.5l0 9 2.6-2.2 4.4 0z" fill="#a8a8a8"/><path d="M3 3.5l0 9 2.6-2.2 4.4 0z" fill="url(#gcur)"/><path d="M10 23.5L24 6.5M16.5 15.5l10 8" stroke="#a4a4a4" stroke-width="1"/><circle cx="17" cy="15.2" r="1.9" fill="#e0e0e0"/></svg><svg class="r" style="left:1335px;top:64px;" width="32" height="27"><path d="M3 3.5l0 9 2.6-2.2 4.4 0z" fill="#a8a8a8"/><path d="M3 3.5l0 9 2.6-2.2 4.4 0z" fill="url(#gcur)"/><path d="M9 22.5h15V6.5C22 15 17 20 9 22.5z" fill="#6f6f6f" stroke="#a4a4a4" stroke-width="1"/><circle cx="9" cy="22.5" r="1.7" fill="#e0e0e0"/><circle cx="24" cy="22.5" r="1.7" fill="#e0e0e0"/><circle cx="24" cy="6.5" r="1.7" fill="#e0e0e0"/><circle cx="19" cy="17" r="1.7" fill="#e0e0e0"/></svg><svg class="r" style="left:1375.2px;top:75.1px;" width="8" height="11"><path d="M0.6 0.5L3.4 5.5L0.6 10.5M4 0.5L6.8 5.5L4 10.5" fill="none" stroke="#1a1a1a" stroke-width="1.3"/></svg><div class="r" style="left:1388px;top:67px;width:1.1px;height:22px;background:#1b1b1b;"></div><div class="r" style="left:1390.3px;top:67px;width:1.1px;height:22px;background:#1b1b1b;"></div><svg class="r" style="left:1400.2px;top:75.1px;" width="8" height="11"><path d="M0.6 0.5L3.4 5.5L0.6 10.5M4 0.5L6.8 5.5L4 10.5" fill="none" stroke="#1a1a1a" stroke-width="1.3"/></svg><div class="r" style="left:1413px;top:67px;width:1.1px;height:22px;background:#1b1b1b;"></div><div class="r" style="left:1415.3px;top:67px;width:1.1px;height:22px;background:#1b1b1b;"></div><svg class="r" style="left:1425.2px;top:75.1px;" width="8" height="11"><path d="M0.6 0.5L3.4 5.5L0.6 10.5M4 0.5L6.8 5.5L4 10.5" fill="none" stroke="#1a1a1a" stroke-width="1.3"/></svg><div class="r" style="left:1438px;top:67px;width:1.1px;height:22px;background:#1b1b1b;"></div><div class="r" style="left:1440.3px;top:67px;width:1.1px;height:22px;background:#1b1b1b;"></div><svg class="r" style="left:1450.2px;top:75.1px;" width="8" height="11"><path d="M0.6 0.5L3.4 5.5L0.6 10.5M4 0.5L6.8 5.5L4 10.5" fill="none" stroke="#1a1a1a" stroke-width="1.3"/></svg><div class="r" style="left:1463px;top:67px;width:1.1px;height:22px;background:#1b1b1b;"></div><div class="r" style="left:1465.3px;top:67px;width:1.1px;height:22px;background:#1b1b1b;"></div><svg class="r" style="left:1475.2px;top:75.1px;" width="8" height="11"><path d="M0.6 0.5L3.4 5.5L0.6 10.5M4 0.5L6.8 5.5L4 10.5" fill="none" stroke="#1a1a1a" stroke-width="1.3"/></svg><div class="r" style="left:1488px;top:67px;width:1.1px;height:22px;background:#1b1b1b;"></div><div class="r" style="left:1490.3px;top:67px;width:1.1px;height:22px;background:#1b1b1b;"></div><svg class="r" style="left:1500.2px;top:75.1px;" width="8" height="11"><path d="M0.6 0.5L3.4 5.5L0.6 10.5M4 0.5L6.8 5.5L4 10.5" fill="none" stroke="#1a1a1a" stroke-width="1.3"/></svg><svg class="r" style="left:1112px;top:97px;" width="32" height="27"><path d="M3 3.5l0 9 2.6-2.2 4.4 0z" fill="#b0b0b0"/><path d="M3 3.5l0 9 2.6-2.2 4.4 0z" fill="url(#gcur)"/><path d="M15.4 8.3h13v14h-15v-3.2h9v-6.3h-4v3h-3z" fill="url(#gm1)"/><rect x="22.9" y="6.1" width="2.2" height="2.4" fill="url(#gm1)"/></svg><svg class="r" style="left:1150px;top:97px;" width="32" height="27"><path d="M11.7 4.2h13v14h-15v-3.2h9v-6.3h-4v3h-3z" fill="url(#gm2)"/><rect x="19.2" y="2" width="2.2" height="2.4" fill="url(#gm2)"/><path d="M5.8 19.9h12" stroke="#cfcfcf" stroke-width="1.1"/><circle cx="5.8" cy="19.9" r="1.6" fill="#e0e0e0"/><circle cx="17.8" cy="19.9" r="1.6" fill="#e0e0e0"/><path d="M28.5 20v4h-4z" fill="#6a6a6a"/></svg><svg class="r" style="left:1187px;top:97px;" width="32" height="27"><path d="M11.7 4.2h13v14h-15v-3.2h9v-6.3h-4v3h-3z" fill="url(#gm2)"/><rect x="19.2" y="2" width="2.2" height="2.4" fill="url(#gm2)"/><path d="M4.5 21c2.5-3 5.5-3 7.8-.800s5 2.5 7.8-.200" fill="none" stroke="#c9c9c9" stroke-width="1.2"/><circle cx="12.3" cy="20.1" r="1.6" fill="#e0e0e0"/><path d="M28.5 20v4h-4z" fill="#6a6a6a"/></svg><svg class="r" style="left:1224px;top:97px;" width="32" height="27"><circle cx="6.6" cy="6.1" r="2.9" fill="none" stroke="#8a8a8a" stroke-width="1"/><path d="M8.6 8.3l3 3.5" stroke="#8a8a8a" stroke-width="1.3"/><path d="M15.3 8.3h13v14h-15v-3.2h9v-6.3h-4v3h-3z" fill="url(#gm1)"/><rect x="22.8" y="6.1" width="2.2" height="2.4" fill="url(#gm1)"/></svg><div class="r" style="left:1265.6px;top:99px;width:1.1px;height:22px;background:#1b1b1b;"></div><div class="r" style="left:1267.8999999999999px;top:99px;width:1.1px;height:22px;background:#1b1b1b;"></div><svg class="r" style="left:1277px;top:97px;" width="28" height="27"><path d="M3 17.6C6 14 9 11.5 12 10.3L14.5 9.6C13 9.5 11 9 9.3 7.7L20.7 6.6C22.8 8 23.6 13 23.9 17.6z" fill="url(#gm1)"/><path d="M9.3 7.7L20.7 6.6L21 5.4C17 5 13 5.5 9.3 7.7z" fill="#bdbdbd"/><circle cx="20.3" cy="13.5" r="1.1" fill="#444"/><path d="M2.5 18.6h22l.600 1.3H1.8z" fill="#7a7a7a"/><path d="M1.5 20.8h24l.600 1.1H0.9z" fill="#5c5c5c"/><path d="M0.8 22.8h25.5l.500 .900H0.3z" fill="#454545"/></svg><div class="r" style="left:1315.5px;top:99px;width:1.1px;height:22px;background:#1b1b1b;"></div><div class="r" style="left:1317.8px;top:99px;width:1.1px;height:22px;background:#1b1b1b;"></div><svg class="r" style="left:1323px;top:97px;" width="32" height="27"><path d="M3 3.5l0 9 2.6-2.2 4.4 0z" fill="#b0b0b0"/><path d="M3 3.5l0 9 2.6-2.2 4.4 0z" fill="url(#gcur)"/><path d="M12 12l5.3-3.5c1 2.3 5.4 2.3 6.4 0l5.3 3.5-2 4.7-2.6-1v7.6h-7.8v-7.6l-2.6 1z" fill="url(#gm1)"/><path d="M17.3 8.5c1 2.3 5.4 2.3 6.4 0" fill="none" stroke="#e8e8e8" stroke-width="1.3"/></svg><div class="r" style="left:1365px;top:99px;width:1.1px;height:22px;background:#1b1b1b;"></div><div class="r" style="left:1367.3px;top:99px;width:1.1px;height:22px;background:#1b1b1b;"></div><svg class="r" style="left:1375px;top:95.5px;" width="32" height="27"><path d="M3 5l0 9 2.6-2.2 4.4 0z" fill="#b0b0b0"/><path d="M3 5l0 9 2.6-2.2 4.4 0z" fill="url(#gcur)"/><path d="M12 11l10-3v14l-10 3z" fill="#8a8a8a"/><path d="M12 11l5-1.5v5l-5 1.5zM17 14.5l5-1.5v5l-5 1.5zM12 19.5l5-1.5v5l-5 1.5z" fill="#3c3c3c"/><ellipse cx="24" cy="14" rx="3" ry="7.5" fill="#c9c9c9"/><path d="M13 25c3 2 9 2 13-2" fill="none" stroke="#ddd" stroke-width="1.2"/></svg><svg class="r" style="left:1425.2px;top:107.2px;" width="8" height="11"><path d="M0.6 0.5L3.4 5.5L0.6 10.5M4 0.5L6.8 5.5L4 10.5" fill="none" stroke="#1a1a1a" stroke-width="1.3"/></svg><div class="r" style="left:1438px;top:99px;width:1.1px;height:22px;background:#1b1b1b;"></div><div class="r" style="left:1440.3px;top:99px;width:1.1px;height:22px;background:#1b1b1b;"></div><svg class="r" style="left:1450.2px;top:107.2px;" width="8" height="11"><path d="M0.6 0.5L3.4 5.5L0.6 10.5M4 0.5L6.8 5.5L4 10.5" fill="none" stroke="#1a1a1a" stroke-width="1.3"/></svg><div class="r" style="left:1463px;top:99px;width:1.1px;height:22px;background:#1b1b1b;"></div><div class="r" style="left:1465.3px;top:99px;width:1.1px;height:22px;background:#1b1b1b;"></div><svg class="r" style="left:1475.2px;top:107.2px;" width="8" height="11"><path d="M0.6 0.5L3.4 5.5L0.6 10.5M4 0.5L6.8 5.5L4 10.5" fill="none" stroke="#1a1a1a" stroke-width="1.3"/></svg><div class="r" style="left:1488px;top:99px;width:1.1px;height:22px;background:#1b1b1b;"></div><div class="r" style="left:1490.3px;top:99px;width:1.1px;height:22px;background:#1b1b1b;"></div><svg class="r" style="left:1500.2px;top:107.2px;" width="8" height="11"><path d="M0.6 0.5L3.4 5.5L0.6 10.5M4 0.5L6.8 5.5L4 10.5" fill="none" stroke="#1a1a1a" stroke-width="1.3"/></svg><svg class="r" style="left:1103.75px;top:128px" width="405.5" height="889" viewBox="1103.75 128 405.5 889"><defs><pattern id="g2" width="7.85" height="7.85" patternUnits="userSpaceOnUse" x="1065.5" y="35"><rect width="7.85" height="7.85" fill="#c8c8c8"/><path d="M0 0.5H7.85M0.5 0V7.85" stroke="#c0c0c0" stroke-width="1.1"/></pattern><pattern id="fab" width="3" height="3" patternUnits="userSpaceOnUse"><rect width="3" height="3" fill="#c7b199"/><path d="M0 0.5h3M0.5 0v3" stroke="#b9a48d" stroke-width="0.8"/></pattern></defs><rect x="1103.75" y="128" width="405.5" height="889" fill="url(#g2)"/><rect x="1292" y="442.5" width="19.5" height="64" fill="#000" opacity="0.055"/><path d="M1301.6 128V1017" stroke="#8f8f8f" stroke-width="1.2"/><path d="M1103.75 506.4H1509.25" stroke="#8f8f8f" stroke-width="1.2"/><rect x="1229.2" y="344.2" width="78.2" height="78.5" fill="url(#fab)" stroke="#f8f400" stroke-width="2.4"/><circle cx="1229.2" cy="344.2" r="3" fill="#f8f400"/><circle cx="1307.4" cy="344.2" r="3" fill="#f8f400"/><circle cx="1229.2" cy="422.7" r="3" fill="#f8f400"/><circle cx="1307.4" cy="422.7" r="3" fill="#f8f400"/></svg><div class="r" style="left:1114.2px;top:138.4px;width:26px;height:25.6px;box-sizing:border-box;border:1px solid #b0b0b0;background:linear-gradient(#d8d8d8,#c9c9c9);box-shadow:inset 0 0 0 1px #dedede;opacity:1"></div><div class="r" style="left:1114.2px;top:167.4px;width:26px;height:25.6px;box-sizing:border-box;border:1px solid #b0b0b0;background:linear-gradient(#d8d8d8,#c9c9c9);box-shadow:inset 0 0 0 1px #dedede;opacity:1"></div><div class="r" style="left:1114.2px;top:196.4px;width:26px;height:25.6px;box-sizing:border-box;border:1px solid #b0b0b0;background:linear-gradient(#d8d8d8,#c9c9c9);box-shadow:inset 0 0 0 1px #dedede;opacity:1"></div><div class="r" style="left:1114.2px;top:225.4px;width:26px;height:25.6px;box-sizing:border-box;border:1px solid #8c8c8c;background:linear-gradient(#d8d8d8,#c9c9c9);box-shadow:inset 0 0 0 1px #dedede;opacity:1"></div><div class="r" style="left:1114.2px;top:254.4px;width:26px;height:25.6px;box-sizing:border-box;border:1px solid #b0b0b0;background:linear-gradient(#d8d8d8,#c9c9c9);box-shadow:inset 0 0 0 1px #dedede;opacity:0.6"></div><svg class="r" style="left:1114.2px;top:138.4px;" width="26" height="26"><path d="M6.2 6.5c1-1.5 3-1.2 4.5 0L22.4 19.8 8 9.8c-1.5-1-2.5-2-1.8-3.3z" fill="#1e1e1e"/><path d="M7.6 6.6c-4 2.5-5.5 6.5-5.2 10.5" fill="none" stroke="#3a96dc" stroke-width="0.9"/><path d="M1.2 20.6c2.8-3.6 8-3.6 10.8 0-2.8 3-8 3-10.8 0z" fill="#c4c4c4" stroke="#1e1e1e" stroke-width="1.2"/><circle cx="6.6" cy="20.5" r="2.5" fill="#1a1a1a"/><circle cx="7.3" cy="19.7" r="0.7" fill="#eee"/><path d="M2 17.8l1.3 1M4.5 16.8l.600 1.2M8.7 16.8l-.600 1.2M11.2 17.8l-1.3 1" stroke="#222" stroke-width="0.7"/></svg><svg class="r" style="left:1114.2px;top:167.4px;" width="26" height="26"><defs><linearGradient id="gts" x1="0" y1="0" x2="0" y2="1"><stop offset="0" stop-color="#ffffff"/><stop offset="1" stop-color="#e2e2e2"/></linearGradient></defs><path d="M3.5 9.5l6-4.5c1.2 2 5.8 2 7 0l6 4.5-2.8 4.5-2.4-1.2v8.7H8.7v-8.7l-2.4 1.2z" fill="url(#gts)" stroke="#cfcfcf" stroke-width="0.5"/><path d="M1.2 20.6c2.8-3.6 8-3.6 10.8 0-2.8 3-8 3-10.8 0z" fill="#c4c4c4" stroke="#1e1e1e" stroke-width="1.2"/><circle cx="6.6" cy="20.5" r="2.5" fill="#1a1a1a"/><circle cx="7.3" cy="19.7" r="0.7" fill="#eee"/><path d="M2 17.8l1.3 1M4.5 16.8l.600 1.2M8.7 16.8l-.600 1.2M11.2 17.8l-1.3 1" stroke="#222" stroke-width="0.7"/></svg><svg class="r" style="left:1114.2px;top:196.4px;" width="26" height="26"><circle cx="13.6" cy="12.3" r="8.4" fill="#3a3a3a"/><text x="13.6" y="17.8" font-family="Liberation Serif, serif" font-style="italic" font-weight="bold" font-size="15.5" fill="#1fc0f4" text-anchor="middle">i</text><path d="M1.2 20.6c2.8-3.6 8-3.6 10.8 0-2.8 3-8 3-10.8 0z" fill="#c4c4c4" stroke="#1e1e1e" stroke-width="1.2"/><circle cx="6.6" cy="20.5" r="2.5" fill="#1a1a1a"/><circle cx="7.3" cy="19.7" r="0.7" fill="#eee"/><path d="M2 17.8l1.3 1M4.5 16.8l.600 1.2M8.7 16.8l-.600 1.2M11.2 17.8l-1.3 1" stroke="#222" stroke-width="0.7"/></svg><svg class="r" style="left:1114.2px;top:225.4px;" width="26" height="26"><path d="M3.3 9.4L7.7 8.7 6.2 18.1 14.9 21 4.8 20.3z" fill="#fafafa" stroke="#c4c4c4" stroke-width="0.5"/><path d="M7.7 8C12 5.5 17 4.8 20.7 5.1L22.2 6.5C20.5 10 19.5 14 19.3 18.1C17.5 20 15.5 20.5 14.9 20.3C12 19 9 18.5 6.2 18.1C7.2 15 7.8 11.5 7.7 8z" fill="#1ea4ea"/><path d="M19.3 18.1c-1.8 1.9-3.8 2.4-4.4 2.2-1.2-.500.5-2.2 4.4-2.2z" fill="#e9f3fa"/></svg><svg class="r" style="left:1114.2px;top:254.4px;opacity:0.85" width="26" height="26"><path d="M3.5 9.5l6-4.5c1.2 2 5.8 2 7 0l6 4.5-2.8 4.5-2.4-1.2v8.7H8.7v-8.7l-2.4 1.2z" fill="#b9b9b9"/><rect x="3.3" y="15.5" width="7" height="6.5" fill="#8c8c8c"/><path d="M4.8 15.5v-2.2a2 2 0 0 1 4 0v2.2" fill="none" stroke="#8c8c8c" stroke-width="1.2"/><rect x="6.3" y="17.8" width="1" height="2" fill="#d0d0d0"/></svg><div class="r" style="left:1509.5px;top:62px;width:1.5px;height:956.5px;background:#1c1c1e;"></div><div class="r" style="left:1102px;top:1017px;width:409px;height:1.5px;background:#1c1c1e;"></div><div class="r" style="left:1102px;top:62px;width:1.5px;height:956px;background:#222224;"></div><div class="r" style="left:1517px;top:42px;width:397.5999999999999px;height:352px;background:#2c2c2c;"></div><div class="r" style="left:1517px;top:42px;width:397.5999999999999px;height:20px;background:#1c1c1e;"></div><svg class="r" style="left:1518px;top:47px;" width="10" height="10"><path d="M9.5 5L5 1v2.4H0.5v3.2H5v2.4z" fill="#b9b9b9"/></svg><div class="r" style="left:1530px;top:46px;width:1px;height:12px;background:#38383a;"></div><div class="t" style="left:1669px;top:42.5px;height:20px;line-height:20px;font-size:12.3px;color:#e4e4e4;letter-spacing:0.071px;">Object Browser</div><svg class="r" style="left:1899px;top:45px;" width="12" height="11"><path d="M1.5 3.5h4M1.5 3.5v6h7v-3.5" fill="none" stroke="#8a8a8a" stroke-width="1.4"/><path d="M4.5 6.5L10 1M6.5 0.8h4v4" fill="none" stroke="#8a8a8a" stroke-width="1.4"/></svg><div class="r" style="left:1517px;top:62px;width:397.5999999999999px;height:23.5px;background:#2c2c2c;"></div><div class="r" style="left:1517px;top:62px;width:46px;height:23.5px;background:#232325;"></div><div class="r" style="left:1562.5px;top:62px;width:1px;height:23.5px;background:#2e2e30;"></div><div class="r" style="left:1563px;top:62px;width:46px;height:23.5px;background:#39393b;"></div><div class="r" style="left:1608.5px;top:62px;width:1px;height:23.5px;background:#2e2e30;"></div><div class="r" style="left:1609px;top:62px;width:46px;height:23.5px;background:#232325;"></div><div class="r" style="left:1654.5px;top:62px;width:1px;height:23.5px;background:#2e2e30;"></div><div class="r" style="left:1655px;top:62px;width:46px;height:23.5px;background:#232325;"></div><div class="r" style="left:1700.5px;top:62px;width:1px;height:23.5px;background:#2e2e30;"></div><div class="r" style="left:1701px;top:62px;width:46px;height:23.5px;background:#232325;"></div><div class="r" style="left:1746.5px;top:62px;width:1px;height:23.5px;background:#2e2e30;"></div><div class="r" style="left:1747px;top:62px;width:46px;height:23.5px;background:#232325;"></div><div class="r" style="left:1792.5px;top:62px;width:1px;height:23.5px;background:#2e2e30;"></div><div class="r" style="left:1793px;top:62px;width:46px;height:23.5px;background:#232325;"></div><div class="r" style="left:1838.5px;top:62px;width:1px;height:23.5px;background:#2e2e30;"></div><div class="r" style="left:1839px;top:62px;width:46px;height:23.5px;background:#232325;"></div><div class="r" style="left:1884.5px;top:62px;width:1px;height:23.5px;background:#2e2e30;"></div><div class="r" style="left:1517px;top:85.4px;width:397.5999999999999px;height:1.6px;background:#1b1b1d;"></div><svg class="r" style="left:1517px;top:60.7px;" width="46" height="24"><path d="M20 7.8h10.5M20 12h10.5M20 16.2h10.5" stroke="#dcdcdc" stroke-width="1.8"/><path d="M16.3 7.8h1.8M16.3 12h1.8M16.3 16.2h1.8" stroke="#dcdcdc" stroke-width="1.8"/></svg><svg class="r" style="left:1563px;top:60.7px;" width="46" height="24"><path d="M15.5 9.2L18.5 8.7 17.5 15.5 24 17.6 16.6 17.1z" fill="#fafafa"/><path d="M18.5 8.2C21.5 6.2 25.5 5.7 28.5 6L29.8 7.2C28.5 10 27.7 13 27.5 16C26 17.5 24.5 17.8 24 17.6C21.8 16.7 19.5 16.2 17.5 15.9C18.2 13.5 18.6 11 18.5 8.2z" fill="#1ea4ea"/><path d="M27.5 16c-1.5 1.5-3 1.8-3.5 1.6-.900-.400.4-1.6 3.5-1.6z" fill="#e9f3fa"/></svg><svg class="r" style="left:1609px;top:60.7px;" width="46" height="24"><defs><linearGradient id="gbt" x1="0" y1="0" x2="0" y2="1"><stop offset="0" stop-color="#d4d4d4"/><stop offset="1" stop-color="#9c9c9c"/></linearGradient></defs><circle cx="23" cy="12" r="7.8" fill="url(#gbt)"/><circle cx="20.6" cy="9.7" r="1.15" fill="#3c3c3c"/><circle cx="25.4" cy="9.7" r="1.15" fill="#3c3c3c"/><circle cx="20.6" cy="14.3" r="1.15" fill="#3c3c3c"/><circle cx="25.4" cy="14.3" r="1.15" fill="#3c3c3c"/></svg><svg class="r" style="left:1655px;top:60.7px;" width="46" height="24"><path d="M17 12h13.5" stroke="#bdbdbd" stroke-width="1.6"/><circle cx="17" cy="12" r="1.9" fill="#c8c8c8"/></svg><svg class="r" style="left:1701px;top:60.7px;" width="46" height="24"><path d="M16 18.5L30.5 5.5" stroke="#d0d0d0" stroke-width="2" stroke-dasharray="3.8 2.6"/></svg><svg class="r" style="left:1747px;top:60.7px;" width="46" height="24"><path d="M15.9 17.8C16.5 13 17.5 10.5 18 10.5S19.5 16.8 20 16.8 21.5 7.4 22.1 7.4 23.7 14.7 24.2 14.7 26.3 4.3 26.9 4.3 27.9 11.5 28.4 11.5 29.5 8 30.5 6.3" fill="none" stroke="#c6c6c6" stroke-width="1.8" stroke-linecap="round" stroke-linejoin="round"/></svg><svg class="r" style="left:1793px;top:60.7px;" width="46" height="24"><path d="M22 19V11l2.5-2.5 .800-3.5h3l.800 3.5 2.5 2.5v8z" fill="#6a6a6a"/><path d="M18.5 19V11l2.5-2.5 .800-3.5h3l.800 3.5 2.5 2.5v8z" fill="#8e8e8e"/><path d="M15 19V11l2.5-2.5 .800-3.5h3l.800 3.5 2.5 2.5v8z" fill="#c2c2c2"/></svg><svg class="r" style="left:1839px;top:60.7px;" width="46" height="24"><rect x="14.5" y="7.4" width="16.7" height="3.3" fill="#e2e2e2"/><path d="M15.3 10.5v3.6" stroke="#dcdcdc" stroke-width="0.9"/><path d="M17 10.5v3.6" stroke="#dcdcdc" stroke-width="0.9"/><path d="M18.7 10.5v3.6" stroke="#dcdcdc" stroke-width="0.9"/><path d="M20.4 10.5v3.6" stroke="#dcdcdc" stroke-width="0.9"/><path d="M22.1 10.5v3.6" stroke="#dcdcdc" stroke-width="0.9"/><path d="M23.8 10.5v3.6" stroke="#dcdcdc" stroke-width="0.9"/><path d="M25.5 10.5v3.6" stroke="#dcdcdc" stroke-width="0.9"/><path d="M27.2 10.5v3.6" stroke="#dcdcdc" stroke-width="0.9"/><path d="M28.9 10.5v3.6" stroke="#dcdcdc" stroke-width="0.9"/><path d="M30.6 10.5v3.6" stroke="#dcdcdc" stroke-width="0.9"/></svg><div class="r" style="left:1687px;top:103.5px;width:64px;height:21.5px;box-sizing:border-box;border:1px solid #1c1c1c;background:#2a2a2c;box-shadow:inset 0 0 0 1px #333335"></div><div class="r" style="left:1752.5px;top:103.5px;width:72px;height:21.5px;box-sizing:border-box;border:1px solid #1c1c1c;background:#2a2a2c;box-shadow:inset 0 0 0 1px #333335"></div><div class="r" style="left:1826px;top:103.5px;width:86px;height:21.5px;box-sizing:border-box;border:1px solid #1c1c1c;background:#2b2b2d;box-shadow:inset 0 0 0 1px #333335"></div><svg class="r" style="left:1694px;top:108px;" width="12" height="12"><path d="M6 1.5v9M1.5 6h9" stroke="#bdbdbd" stroke-width="1.4"/></svg><div class="t" style="left:1711.5px;top:105.5px;height:20px;line-height:20px;font-size:13px;color:#e4e4e4;letter-spacing:-0.246px;">Доб.</div><svg class="r" style="left:1759px;top:107px;" width="13" height="13"><rect x="1" y="3.5" width="7.5" height="8.5" fill="#6a6a6a"/><path d="M3.5 3.5v-2h8v9h-3" fill="none" stroke="#6a6a6a" stroke-width="1.2"/><path d="M2.5 6h4.5M2.5 8h4.5M2.5 10h4.5" stroke="#333" stroke-width="0.8"/></svg><div class="t" style="left:1777px;top:105.5px;height:20px;line-height:20px;font-size:13px;color:#e4e4e4;letter-spacing:-0.286px;">Копия</div><svg class="r" style="left:1832px;top:107px;" width="14" height="13"><rect x="1" y="5" width="7" height="7" fill="#3d3d3d"/><path d="M9.5 1.5v4M7.5 3.5h4" stroke="#3d3d3d" stroke-width="1.2"/></svg><div class="t" style="left:1851px;top:105.5px;height:20px;line-height:20px;font-size:13px;color:#4a4a4a;letter-spacing:-0.549px;">Примен.</div><div class="r" style="left:1527px;top:133px;width:379px;height:1px;background:#1e1e1e;"></div><div class="r" style="left:1532px;top:136px;width:369px;height:41px;background:#36414c;"></div><div class="r" style="left:1532px;top:177.5px;width:369px;height:1px;background:#1e1e1e;"></div><svg class="r" style="left:1540px;top:148px;" width="18" height="16"><path d="M2 8.5l4.5 4.5L15.5 3" fill="none" stroke="#3eb5f3" stroke-width="3.2"/></svg><svg class="r" style="left:1568px;top:138px" width="37" height="37" viewBox="0 0 37.3 37" preserveAspectRatio="none"><rect width="37.3" height="37" fill="#d3c1a9"/><rect x="0" y="0" width="1.2" height="37" fill="#dccbb4" opacity="0.6"/><rect x="3" y="0" width="1.2" height="37" fill="#dccbb4" opacity="0.6"/><rect x="6" y="0" width="1.2" height="37" fill="#dccbb4" opacity="0.6"/><rect x="9" y="0" width="1.2" height="37" fill="#dccbb4" opacity="0.6"/><rect x="12" y="0" width="1.2" height="37" fill="#dccbb4" opacity="0.6"/><rect x="15" y="0" width="1.2" height="37" fill="#dccbb4" opacity="0.6"/><rect x="18" y="0" width="1.2" height="37" fill="#dccbb4" opacity="0.6"/><rect x="21" y="0" width="1.2" height="37" fill="#dccbb4" opacity="0.6"/><rect x="24" y="0" width="1.2" height="37" fill="#dccbb4" opacity="0.6"/><rect x="27" y="0" width="1.2" height="37" fill="#dccbb4" opacity="0.6"/><rect x="30" y="0" width="1.2" height="37" fill="#dccbb4" opacity="0.6"/><rect x="33" y="0" width="1.2" height="37" fill="#dccbb4" opacity="0.6"/><rect x="36" y="0" width="1.2" height="37" fill="#dccbb4" opacity="0.6"/><rect x="0.4" y="0.4" width="3.6" height="4.2" fill="#9e9b95"/><rect x="9" y="0.4" width="2.9" height="4.2" fill="#9e9b95"/><rect x="15.1" y="0.4" width="2.9" height="4.2" fill="#9e9b95"/><rect x="22.2" y="0.4" width="3.9" height="4.2" fill="#9e9b95"/><rect x="30" y="0.4" width="3.4" height="4.2" fill="#9e9b95"/><rect x="0.4" y="11.2" width="3.6" height="4.6" fill="#9e9b95"/><rect x="9" y="11.2" width="2.9" height="4.6" fill="#9e9b95"/><rect x="15.1" y="11.2" width="2.9" height="4.6" fill="#9e9b95"/><rect x="22.2" y="11.2" width="3.9" height="4.6" fill="#9e9b95"/><rect x="30" y="11.2" width="3.4" height="4.6" fill="#9e9b95"/><rect x="0.4" y="22" width="3.6" height="5.7" fill="#9e9b95"/><rect x="9" y="22" width="2.9" height="5.7" fill="#9e9b95"/><rect x="15.1" y="22" width="2.9" height="5.7" fill="#9e9b95"/><rect x="22.2" y="22" width="3.9" height="5.7" fill="#9e9b95"/><rect x="30" y="22" width="3.4" height="5.7" fill="#9e9b95"/></svg><div class="t" style="left:1615.3px;top:146.5px;height:20px;line-height:20px;font-size:12.5px;color:#e4e4e4;letter-spacing:-0.031px;">(B)SwatchOn_QL-004931_Velvet</div><div class="r" style="left:1853px;top:147px;width:17px;height:17px;box-sizing:border-box;border:1px solid #1e1e1e;background:#3a3a3c"></div><svg class="r" style="left:1853px;top:147px;" width="17" height="17"><rect x="4" y="6" width="7.5" height="7.5" fill="#777"/><path d="M6 6V3.5h7.5V11h-2" fill="none" stroke="#777" stroke-width="1"/><path d="M7.8 7.5v4.5M5.5 9.8h4.5" stroke="#3a3a3c" stroke-width="1"/></svg><div class="r" style="left:1517px;top:393px;width:397.5999999999999px;height:1.2px;background:#1b1b1d;"></div><div class="r" style="left:1516.2px;top:42px;width:1px;height:352px;background:#1d1d1f;"></div><div class="r" style="left:1517px;top:400px;width:397.5999999999999px;height:619px;background:#2c2c2c;"></div><div class="r" style="left:1517px;top:400px;width:397.5999999999999px;height:20px;background:#1c1c1e;"></div><svg class="r" style="left:1518px;top:405px;" width="10" height="10"><path d="M9.5 5L5 1v2.4H0.5v3.2H5v2.4z" fill="#b9b9b9"/></svg><div class="r" style="left:1530px;top:404px;width:1px;height:12px;background:#38383a;"></div><div class="t" style="left:1670px;top:400.5px;height:20px;line-height:20px;font-size:12.3px;color:#e4e4e4;letter-spacing:0.069px;">Property Editor</div><svg class="r" style="left:1899px;top:403px;" width="12" height="11"><path d="M1.5 3.5h4M1.5 3.5v6h7v-3.5" fill="none" stroke="#8a8a8a" stroke-width="1.4"/><path d="M4.5 6.5L10 1M6.5 0.8h4v4" fill="none" stroke="#8a8a8a" stroke-width="1.4"/></svg><div class="t" style="left:1545.2px;top:426px;height:20px;line-height:20px;font-size:12.4px;color:#e4e4e4;letter-spacing:-0.233px;">Ткань</div><div class="r" style="left:1741.3px;top:422px;width:93.3px;height:22.5px;box-sizing:border-box;border:1px solid #0e0e0e;background:linear-gradient(#37373a 0,#2f2f31 46%,#212123 52%,#2b2b2d 100%);box-shadow:inset 0 0 0 1px #39393b"></div><div class="r" style="left:1837.4px;top:422px;width:70px;height:22.5px;box-sizing:border-box;border:1px solid #0e0e0e;background:linear-gradient(#37373a 0,#2f2f31 46%,#212123 52%,#2b2b2d 100%);box-shadow:inset 0 0 0 1px #39393b"></div><svg class="r" style="left:1751px;top:426.5px;" width="14" height="13"><path d="M1.5 2.5h4l1 1.3h5.5v1.7H3.2L1.5 11z" fill="#5a5a5a"/><path d="M3 5.5h10L11.5 12H1.2z" fill="#6c6c6c"/></svg><div class="t" style="left:1771px;top:426px;height:20px;line-height:20px;font-size:12.6px;color:#e4e4e4;letter-spacing:-0.164px;">Открыть</div><svg class="r" style="left:1847px;top:426.5px;" width="13" height="13"><path d="M1 1h9.5L12 2.5V12H1z" fill="#707070"/><rect x="3" y="1" width="6" height="3.8" fill="#9c9c9c"/><rect x="6.8" y="1.5" width="1.5" height="2.6" fill="#5a5a5a"/><rect x="2.5" y="7" width="8" height="5" fill="#5c5c5c"/></svg><div class="t" style="left:1867px;top:426px;height:20px;line-height:20px;font-size:12.6px;color:#e4e4e4;letter-spacing:-0.639px;width:29px;overflow:hidden;">Сохранить</div><div class="r" style="left:1544px;top:446.7px;width:352px;height:1px;background:#222224;"></div><svg class="r" style="left:1529px;top:459.5px;" width="10" height="8"><path d="M0.3 0.8h9l-4.5 6.4z" fill="#d8d8d8"/></svg><div class="t" style="left:1544px;top:454px;height:20px;line-height:20px;font-size:12.700000000000001px;color:#4db5ee;letter-spacing:-0.417px;">Информация</div><div class="r" style="left:1544px;top:475.2px;width:352px;height:1px;background:#222224;"></div><div class="t" style="left:1563px;top:481.5px;height:20px;line-height:20px;font-size:12.4px;color:#e4e4e4;letter-spacing:-0.826px;">Имя</div><div class="t" style="left:1835px;top:481px;height:20px;line-height:20px;font-size:12.4px;color:#e4e4e4;width:61px;overflow:hidden;">(B)SwatchOn</div><div class="r" style="left:1563px;top:502.7px;width:333px;height:1px;background:#222224;"></div><div class="t" style="left:1563px;top:509.5px;height:20px;line-height:20px;font-size:12.4px;color:#e4e4e4;letter-spacing:0.148px;">№ предмета</div><div class="t" style="left:1835px;top:509px;height:20px;line-height:20px;font-size:12.4px;color:#e4e4e4;letter-spacing:-0.382px;">None</div><div class="r" style="left:1563px;top:530.7px;width:333px;height:1px;background:#222224;"></div><svg class="r" style="left:1548.4px;top:542.5px;" width="10" height="8"><path d="M0.3 0.8h9l-4.5 6.4z" fill="#d8d8d8"/></svg><div class="t" style="left:1563px;top:537.5px;height:20px;line-height:20px;font-size:12.4px;color:#e4e4e4;letter-spacing:-0.221px;">Классификация</div><div class="t" style="left:1835px;top:537px;height:20px;line-height:20px;font-size:12.4px;color:#e4e4e4;letter-spacing:-0.093px;">Select</div><div class="r" style="left:1563px;top:558.7px;width:333px;height:1px;background:#222224;"></div><div class="t" style="left:1582.2px;top:565.5px;height:20px;line-height:20px;font-size:12.4px;color:#e4e4e4;letter-spacing:-0.615px;">Состав</div><div class="t" style="left:1830px;top:565px;height:20px;line-height:20px;font-size:12.4px;color:#e4e4e4;letter-spacing:-0.382px;">None</div><div class="r" style="left:1582px;top:586.7px;width:314px;height:1px;background:#222224;"></div><div class="t" style="left:1563px;top:593.5px;height:20px;line-height:20px;font-size:12.4px;color:#e4e4e4;letter-spacing:-0.357px;">Supplier</div><div class="t" style="left:1834px;top:593px;height:20px;line-height:20px;font-size:12.4px;color:#e4e4e4;letter-spacing:-0.382px;">None</div><div class="r" style="left:1563px;top:614.7px;width:333px;height:1px;background:#222224;"></div><svg class="r" style="left:1529px;top:626.5px;" width="10" height="8"><path d="M0.3 0.8h9l-4.5 6.4z" fill="#d8d8d8"/></svg><div class="t" style="left:1544px;top:621.5px;height:20px;line-height:20px;font-size:12.700000000000001px;color:#4db5ee;letter-spacing:-0.625px;">Материал</div><div class="r" style="left:1544px;top:642.7px;width:352px;height:1px;background:#222224;"></div><div class="r" style="left:1544px;top:646.5px;width:80.5px;height:24px;background:linear-gradient(#343436,#2a2a2c);border-top:1px solid #3d3d3f;box-sizing:border-box"></div><div class="t" style="left:1555.3px;top:649px;height:20px;line-height:20px;font-size:12.4px;color:#e4e4e4;letter-spacing:-0.249px;">С лицевой</div><div class="t" style="left:1636.4px;top:649px;height:20px;line-height:20px;font-size:12.4px;color:#e4e4e4;letter-spacing:-0.357px;">С изнанки</div><div class="t" style="left:1714.4px;top:649px;height:20px;line-height:20px;font-size:12.4px;color:#e4e4e4;letter-spacing:-0.405px;">С торца</div><div class="r" style="left:1544px;top:669.7px;width:352px;height:1px;background:#222224;"></div><div class="r" style="left:1813.2px;top:682.5px;width:83px;height:19.5px;background:#242426;"></div><div class="t" style="left:1573px;top:683.5px;height:20px;line-height:20px;font-size:12.4px;color:#e4e4e4;letter-spacing:0.211px;">Texture Repeat Type</div><div class="t" style="left:1816.9px;top:683px;height:20px;line-height:20px;font-size:12.4px;color:#e4e4e4;letter-spacing:-0.197px;">Repeat</div><div class="r" style="left:1572px;top:704.7px;width:324px;height:1px;background:#222224;"></div><div class="r" style="left:1743.8px;top:710.2px;width:153px;height:19.8px;background:#242426;"></div><div class="t" style="left:1573px;top:711.5px;height:20px;line-height:20px;font-size:12.4px;color:#e4e4e4;letter-spacing:-0.086px;">Тип</div><div class="t" style="left:1748px;top:711px;height:20px;line-height:20px;font-size:12.4px;color:#e4e4e4;letter-spacing:-0.26px;">Fabric_Matte</div><div class="r" style="left:1572px;top:732.7px;width:324px;height:1px;background:#222224;"></div><svg class="r" style="left:1557.4px;top:744.5px;" width="10" height="8"><path d="M0.3 0.8h9l-4.5 6.4z" fill="#d8d8d8"/></svg><div class="t" style="left:1572.4px;top:739.5px;height:20px;line-height:20px;font-size:12.4px;color:#e4e4e4;letter-spacing:-0.349px;">Базовые параметры</div><div class="r" style="left:1572px;top:760.7px;width:324px;height:1px;background:#222224;"></div><svg class="r" style="left:1578.3px;top:772px;" width="8" height="10"><path d="M0.8 0.4v9l6.2-4.5z" fill="#d8d8d8"/></svg><div class="t" style="left:1592.2px;top:767px;height:20px;line-height:20px;font-size:12.4px;color:#e4e4e4;letter-spacing:-0.03px;">Текстура</div><svg class="r" style="left:1805.7px;top:764px" width="39.6" height="24.8" viewBox="0 0 37.3 37" preserveAspectRatio="none"><rect width="37.3" height="37" fill="#d3c1a9"/><rect x="0" y="0" width="1.2" height="37" fill="#dccbb4" opacity="0.6"/><rect x="3" y="0" width="1.2" height="37" fill="#dccbb4" opacity="0.6"/><rect x="6" y="0" width="1.2" height="37" fill="#dccbb4" opacity="0.6"/><rect x="9" y="0" width="1.2" height="37" fill="#dccbb4" opacity="0.6"/><rect x="12" y="0" width="1.2" height="37" fill="#dccbb4" opacity="0.6"/><rect x="15" y="0" width="1.2" height="37" fill="#dccbb4" opacity="0.6"/><rect x="18" y="0" width="1.2" height="37" fill="#dccbb4" opacity="0.6"/><rect x="21" y="0" width="1.2" height="37" fill="#dccbb4" opacity="0.6"/><rect x="24" y="0" width="1.2" height="37" fill="#dccbb4" opacity="0.6"/><rect x="27" y="0" width="1.2" height="37" fill="#dccbb4" opacity="0.6"/><rect x="30" y="0" width="1.2" height="37" fill="#dccbb4" opacity="0.6"/><rect x="33" y="0" width="1.2" height="37" fill="#dccbb4" opacity="0.6"/><rect x="36" y="0" width="1.2" height="37" fill="#dccbb4" opacity="0.6"/><rect x="0.4" y="0.4" width="3.6" height="4.2" fill="#9e9b95"/><rect x="9" y="0.4" width="2.9" height="4.2" fill="#9e9b95"/><rect x="15.1" y="0.4" width="2.9" height="4.2" fill="#9e9b95"/><rect x="22.2" y="0.4" width="3.9" height="4.2" fill="#9e9b95"/><rect x="30" y="0.4" width="3.4" height="4.2" fill="#9e9b95"/><rect x="0.4" y="11.2" width="3.6" height="4.6" fill="#9e9b95"/><rect x="9" y="11.2" width="2.9" height="4.6" fill="#9e9b95"/><rect x="15.1" y="11.2" width="2.9" height="4.6" fill="#9e9b95"/><rect x="22.2" y="11.2" width="3.9" height="4.6" fill="#9e9b95"/><rect x="30" y="11.2" width="3.4" height="4.6" fill="#9e9b95"/><rect x="0.4" y="22" width="3.6" height="5.7" fill="#9e9b95"/><rect x="9" y="22" width="2.9" height="5.7" fill="#9e9b95"/><rect x="15.1" y="22" width="2.9" height="5.7" fill="#9e9b95"/><rect x="22.2" y="22" width="3.9" height="5.7" fill="#9e9b95"/><rect x="30" y="22" width="3.4" height="5.7" fill="#9e9b95"/></svg><div class="r" style="left:1868.3px;top:768.7px;width:16px;height:15.5px;box-sizing:border-box;border:1px solid #3a3a3c;border-right-width:1px;background:#2a2a2c"></div><div class="r" style="left:1887.5px;top:768.7px;width:9px;height:15.5px;box-sizing:border-box;border:1px solid #3a3a3c;border-right-width:0px;background:#2a2a2c"></div><svg class="r" style="left:1868.3px;top:768.7px;" width="16" height="15.5"><rect x="3.5" y="3.5" width="3.6" height="3.6" fill="#707070"/><rect x="9" y="3.5" width="3.6" height="3.6" fill="#707070"/><rect x="3.5" y="8.7" width="3.6" height="3.6" fill="#707070"/><rect x="9" y="8.7" width="3.6" height="3.6" fill="#707070"/></svg><svg class="r" style="left:1887.5px;top:768.7px;" width="9" height="15.5"><path d="M2.5 3.5h6v8h-6z" fill="#555"/><path d="M2.5 3.5l6 6" stroke="#2a2a2c" stroke-width="1.2"/></svg><div class="r" style="left:1591px;top:788.7px;width:305px;height:1px;background:#222224;"></div><svg class="r" style="left:1578.3px;top:800px;" width="8" height="10"><path d="M0.8 0.4v9l6.2-4.5z" fill="#d8d8d8"/></svg><div class="t" style="left:1591px;top:795px;height:20px;line-height:20px;font-size:12.4px;color:#e4e4e4;letter-spacing:-0.134px;">Карта нормалей</div><svg class="r" style="left:1805.7px;top:792px;" width="39.6" height="25"><rect width="39.6" height="25" fill="#7272f4"/><rect x="12.8" y="3.8" width="2.2" height="2.3" fill="#8a6af0"/><rect x="14.5" y="1.4" width="2.6" height="1.6" fill="#7f8cfa"/><rect x="16.6" y="6" width="3.3" height="2.7" fill="#7f8cfa"/><rect x="4.9" y="5.6" width="4.8" height="2.4" fill="#7f8cfa"/><rect x="15.7" y="24.4" width="3.7" height="1.7" fill="#8a6af0"/><rect x="16.6" y="13.5" width="2.9" height="2.7" fill="#7f8cfa"/><rect x="7.2" y="14.5" width="3.1" height="2.3" fill="#5f7cf8"/><rect x="2.5" y="1.5" width="3.5" height="2.3" fill="#5f7cf8"/><rect x="30.8" y="11.6" width="3.1" height="1.9" fill="#6a66ea"/><rect x="7.1" y="19.5" width="3.7" height="2.3" fill="#8a6af0"/><rect x="34.7" y="18.2" width="3.8" height="1.6" fill="#9a78ee"/><rect x="20.3" y="4.1" width="2.5" height="2.2" fill="#9a78ee"/><rect x="1.6" y="16.7" width="3.7" height="2.8" fill="#7f8cfa"/><rect x="12.4" y="17.4" width="3.5" height="2.7" fill="#7f8cfa"/><rect x="2.7" y="2.3" width="3.4" height="2.5" fill="#9a78ee"/><rect x="2.4" y="17.5" width="5" height="2.7" fill="#7f8cfa"/><rect x="11.3" y="9.6" width="2.1" height="2.2" fill="#9a78ee"/><rect x="6.7" y="2.9" width="2.7" height="1.9" fill="#8a6af0"/><rect x="29.2" y="9.9" width="2.2" height="2.2" fill="#6a66ea"/><rect x="21.8" y="22.1" width="4.6" height="1.9" fill="#6a66ea"/><rect x="16.4" y="9" width="4.9" height="1.7" fill="#6a66ea"/><rect x="7" y="5.8" width="2" height="2.7" fill="#5f7cf8"/><rect x="7.2" y="7" width="3.3" height="2.1" fill="#5f7cf8"/><rect x="22.4" y="23.8" width="4.9" height="2.5" fill="#7f8cfa"/><rect x="29.3" y="11.4" width="3.2" height="2.1" fill="#7f8cfa"/><rect x="4.1" y="15.9" width="2.6" height="3" fill="#8a6af0"/><rect x="17.4" y="2.7" width="2.2" height="1.5" fill="#7f8cfa"/><rect x="6" y="2.5" width="3.8" height="1.6" fill="#9a78ee"/><rect x="8.2" y="9.4" width="4.9" height="2.4" fill="#9a78ee"/><rect x="18.8" y="2.9" width="5" height="2.2" fill="#6a66ea"/><rect x="19.2" y="2.1" width="4.2" height="2.6" fill="#8a6af0"/><rect x="19" y="17.3" width="2.1" height="2.9" fill="#7f8cfa"/><rect x="20.9" y="3.7" width="4.7" height="2.6" fill="#7f8cfa"/><rect x="11.8" y="16.1" width="4.1" height="1.9" fill="#8a6af0"/><rect x="14.5" y="4.2" width="3.6" height="2.7" fill="#5f7cf8"/><rect x="13.1" y="5.6" width="4.4" height="2.7" fill="#5f7cf8"/><rect x="29.3" y="5.7" width="3.5" height="2.6" fill="#7f8cfa"/><rect x="39.2" y="19.8" width="2.8" height="2.5" fill="#6a66ea"/><rect x="37.9" y="11.2" width="4.9" height="2" fill="#9a78ee"/><rect x="8.7" y="5.7" width="3" height="2.2" fill="#5f7cf8"/><rect x="39" y="15.3" width="3.4" height="2.5" fill="#8a6af0"/><rect x="31.7" y="2.1" width="4.7" height="2.7" fill="#8a6af0"/><rect x="29.7" y="12" width="3.3" height="2.5" fill="#5f7cf8"/><rect x="3.4" y="23.7" width="3.4" height="2.6" fill="#6a66ea"/><rect x="3.4" y="4" width="2.1" height="2.4" fill="#5f7cf8"/><rect x="18.4" y="16.4" width="4.5" height="3" fill="#7f8cfa"/><rect x="26" y="8.8" width="3.6" height="1.5" fill="#7f8cfa"/><rect x="31.7" y="18.2" width="3.6" height="2.9" fill="#8a6af0"/><rect x="17.2" y="21.8" width="2.1" height="1.8" fill="#5f7cf8"/><rect x="19.8" y="19.1" width="2.8" height="2.1" fill="#9a78ee"/><rect x="5.2" y="22.8" width="4.7" height="2.5" fill="#9a78ee"/><rect x="32.3" y="12.9" width="2.4" height="1.7" fill="#7f8cfa"/><rect x="20.2" y="21.8" width="3.8" height="2.7" fill="#5f7cf8"/><rect x="5.9" y="3.5" width="4.2" height="2.3" fill="#7f8cfa"/><rect x="12.9" y="13" width="3.4" height="2.7" fill="#7f8cfa"/><rect x="35" y="1.4" width="2.8" height="2.7" fill="#5f7cf8"/><rect x="20.1" y="14" width="3.3" height="2.4" fill="#8a6af0"/><rect x="20" y="12.8" width="3.4" height="2.3" fill="#9a78ee"/><rect x="18.9" y="23.5" width="4.6" height="2.9" fill="#7f8cfa"/><rect x="10.3" y="14" width="4.5" height="1.7" fill="#5f7cf8"/></svg><div class="r" style="left:1868.3px;top:796.7px;width:16px;height:15.5px;box-sizing:border-box;border:1px solid #3a3a3c;border-right-width:1px;background:#2a2a2c"></div><div class="r" style="left:1887.5px;top:796.7px;width:9px;height:15.5px;box-sizing:border-box;border:1px solid #3a3a3c;border-right-width:0px;background:#2a2a2c"></div><svg class="r" style="left:1868.3px;top:796.7px;" width="16" height="15.5"><rect x="3.5" y="3.5" width="3.6" height="3.6" fill="#707070"/><rect x="9" y="3.5" width="3.6" height="3.6" fill="#707070"/><rect x="3.5" y="8.7" width="3.6" height="3.6" fill="#707070"/><rect x="9" y="8.7" width="3.6" height="3.6" fill="#707070"/></svg><svg class="r" style="left:1887.5px;top:796.7px;" width="9" height="15.5"><path d="M2.5 3.5h6v8h-6z" fill="#555"/><path d="M2.5 3.5l6 6" stroke="#2a2a2c" stroke-width="1.2"/></svg><div class="r" style="left:1591px;top:816.7px;width:305px;height:1px;background:#222224;"></div><svg class="r" style="left:1578.3px;top:828px;" width="8" height="10"><path d="M0.8 0.4v9l6.2-4.5z" fill="#d8d8d8"/></svg><div class="t" style="left:1591px;top:823px;height:20px;line-height:20px;font-size:12.4px;color:#e4e4e4;letter-spacing:0.005px;">Карта Смещения (только в Рендере)</div><div class="r" style="left:1868.3px;top:824.7px;width:16px;height:15.5px;box-sizing:border-box;border:1px solid #3a3a3c;border-right-width:1px;background:#2a2a2c"></div><div class="r" style="left:1887.5px;top:824.7px;width:9px;height:15.5px;box-sizing:border-box;border:1px solid #3a3a3c;border-right-width:0px;background:#2a2a2c"></div><svg class="r" style="left:1868.3px;top:824.7px;" width="16" height="15.5"><rect x="3.5" y="3.5" width="3.6" height="3.6" fill="#707070"/><rect x="9" y="3.5" width="3.6" height="3.6" fill="#707070"/><rect x="3.5" y="8.7" width="3.6" height="3.6" fill="#707070"/><rect x="9" y="8.7" width="3.6" height="3.6" fill="#707070"/></svg><svg class="r" style="left:1887.5px;top:824.7px;" width="9" height="15.5"><path d="M2.5 3.5h6v8h-6z" fill="#555"/><path d="M2.5 3.5l6 6" stroke="#2a2a2c" stroke-width="1.2"/></svg><div class="r" style="left:1591px;top:844.7px;width:305px;height:1px;background:#222224;"></div><div class="t" style="left:1591px;top:851.5px;height:20px;line-height:20px;font-size:12.4px;color:#e4e4e4;letter-spacing:-0.429px;">Цвет</div><div class="t" style="left:1824px;top:851px;height:20px;line-height:20px;font-size:12.4px;color:#e4e4e4;letter-spacing:0.299px;">(None)</div><div class="r" style="left:1591px;top:874.7px;width:305px;height:1px;background:#222224;"></div><div class="t" style="left:1591px;top:890px;height:20px;line-height:20px;font-size:12.4px;color:#e4e4e4;letter-spacing:-0.037px;">Непрозрач.</div><div class="t" style="left:1820.3px;top:879px;height:20px;line-height:20px;font-size:12px;color:#e4e4e4;letter-spacing:0.239px;">100</div><div class="r" style="left:1818px;top:907.8px;width:78px;height:2.8px;background:#9c9c9c;"></div><div class="r" style="left:1591px;top:919.7px;width:305px;height:1px;background:#222224;"></div><svg class="r" style="left:1578.3px;top:931px;" width="8" height="10"><path d="M0.8 0.4v9l6.2-4.5z" fill="#d8d8d8"/></svg><div class="t" style="left:1591px;top:926px;height:20px;line-height:20px;font-size:12.4px;color:#e4e4e4;letter-spacing:-0.261px;">Opacity Map</div><div class="r" style="left:1868.3px;top:927.7px;width:16px;height:15.5px;box-sizing:border-box;border:1px solid #3a3a3c;border-right-width:1px;background:#2a2a2c"></div><div class="r" style="left:1887.5px;top:927.7px;width:9px;height:15.5px;box-sizing:border-box;border:1px solid #3a3a3c;border-right-width:0px;background:#2a2a2c"></div><svg class="r" style="left:1868.3px;top:927.7px;" width="16" height="15.5"><rect x="3.5" y="3.5" width="3.6" height="3.6" fill="#707070"/><rect x="9" y="3.5" width="3.6" height="3.6" fill="#707070"/><rect x="3.5" y="8.7" width="3.6" height="3.6" fill="#707070"/><rect x="9" y="8.7" width="3.6" height="3.6" fill="#707070"/></svg><svg class="r" style="left:1887.5px;top:927.7px;" width="9" height="15.5"><path d="M2.5 3.5h6v8h-6z" fill="#555"/><path d="M2.5 3.5l6 6" stroke="#2a2a2c" stroke-width="1.2"/></svg><div class="r" style="left:1591px;top:947.7px;width:305px;height:1px;background:#222224;"></div><svg class="r" style="left:1557.4px;top:959.5px;" width="10" height="8"><path d="M0.3 0.8h9l-4.5 6.4z" fill="#d8d8d8"/></svg><div class="t" style="left:1572.4px;top:954.5px;height:20px;line-height:20px;font-size:12.4px;color:#e4e4e4;letter-spacing:0.062px;">Отблеск</div><div class="r" style="left:1572px;top:976.7px;width:324px;height:1px;background:#222224;"></div><div class="r" style="left:1795px;top:981.6px;width:101px;height:18.4px;background:#242426;"></div><svg class="r" style="left:1575.8px;top:987.5px;" width="10" height="8"><path d="M0.3 0.8h9l-4.5 6.4z" fill="#d8d8d8"/></svg><div class="t" style="left:1591px;top:982.5px;height:20px;line-height:20px;font-size:12.4px;color:#e4e4e4;letter-spacing:-0.143px;">Шероховатость</div><div class="t" style="left:1799px;top:982px;height:20px;line-height:20px;font-size:12.4px;color:#e4e4e4;letter-spacing:-0.295px;">Карта</div><div class="r" style="left:1896px;top:420px;width:18.6px;height:580px;background:#2c2c2c;"></div><div class="r" style="left:1896.3px;top:422.2px;width:16.8px;height:16.5px;box-sizing:border-box;background:#2d2d2f;border:1px solid #222224;border-radius:4.5px"></div><svg class="r" style="left:1900.7px;top:428px;" width="9" height="7"><path d="M1.3 5.2h6.4L4.5 1z" fill="#19191b"/></svg><div class="r" style="left:1896.5px;top:440px;width:16.6px;height:541px;background:#252527;border-radius:4px"></div><div class="r" style="left:1897px;top:440.5px;width:15.6px;height:174.5px;background:#333335;border-radius:4px"></div><div class="r" style="left:1896.3px;top:981.5px;width:16.8px;height:16.5px;box-sizing:border-box;background:#2d2d2f;border:1px solid #222224;border-radius:4.5px"></div><svg class="r" style="left:1900.7px;top:987.3px;" width="9" height="7"><path d="M1.3 1h6.4L4.5 5.2z" fill="#19191b"/></svg><div class="r" style="left:1517px;top:999px;width:379px;height:18px;background:#2c2c2c;"></div><div class="r" style="left:1517.8px;top:999.5px;width:16.5px;height:17px;box-sizing:border-box;background:#2d2d2f;border:1px solid #222224;border-radius:4.5px"></div><svg class="r" style="left:1522.3px;top:1004px;" width="7" height="9"><path d="M6 0.5v8L0.8 4.5z" fill="#19191b"/></svg><div class="r" style="left:1535px;top:999.8px;width:343px;height:16.5px;background:#252527;border-radius:4px"></div><div class="r" style="left:1535.5px;top:1000.3px;width:299px;height:15.5px;background:#2f2f31;border-radius:4px"></div><div class="r" style="left:1878.5px;top:999.5px;width:16.5px;height:17px;box-sizing:border-box;background:#2d2d2f;border:1px solid #222224;border-radius:4.5px"></div><svg class="r" style="left:1883.5px;top:1004px;" width="7" height="9"><path d="M1 0.5v8L6.2 4.5z" fill="#19191b"/></svg><div class="r" style="left:1517px;top:1017.6px;width:397.5999999999999px;height:1.2px;background:#1b1b1d;"></div><div class="r" style="left:1516.2px;top:400px;width:1px;height:618.5px;background:#1d1d1f;"></div><div class="r" style="left:148px;top:89px;width:960px;height:540px;box-sizing:border-box;border:1px solid #000;border-top-color:#222;border-left-color:#222;border-radius:7px 7px 0 0;background:linear-gradient(#98b4d6 0,#a4bfdf 22px,#b4cce8 48px,#bcd3ed 70px,#bcd3ed 100%);"></div><div class="r" style="left:149px;top:90px;width:958px;height:538px;box-sizing:border-box;border-radius:6px 6px 0 0;border-top:1px solid #f6fafd;border-left:1px solid #eef4fb;border-right:1px solid #45d2f4;border-bottom:1px solid #45d2f4"></div><div class="r" style="left:158px;top:99px;width:16px;height:16px;border-radius:3px;background:linear-gradient(#151517 0,#19191b 80%,#2c7fa8 100%)"></div><svg class="r" style="left:158px;top:99px;" width="16" height="16"><circle cx="8" cy="7.8" r="4.6" fill="none" stroke="#fff" stroke-width="1.4" stroke-dasharray="3.5 0.9" stroke-dashoffset="-6"/><rect x="10" y="5.7" width="5" height="4.2" fill="#17171a"/></svg><div class="t" style="left:178.3px;top:98px;height:20px;line-height:20px;font-size:12.1px;color:#000000;letter-spacing:-0.384px;text-shadow:0 0 6px #fff,0 0 3px #fff;">Сохранить файл</div><div class="r" style="left:1067px;top:99px;width:31px;height:17px;box-sizing:border-box;border:1px solid #4e1a16;border-radius:3px;background:linear-gradient(#e9aca2 0,#d9796b 45%,#c23e2b 50%,#c9503c 75%,#dd8a72 100%);box-shadow:inset 0 0 0 1px rgba(255,255,255,0.35)"></div><svg class="r" style="left:1076px;top:102px;" width="13" height="11"><path d="M2.5 1.8l8 7.4M10.5 1.8l-8 7.4" stroke="#3c3c3c" stroke-width="3.4" opacity="0.55"/><path d="M2.5 1.8l8 7.4M10.5 1.8l-8 7.4" stroke="#fff" stroke-width="2.2"/></svg><div class="r" style="left:170px;top:124.5px;width:30px;height:21px;background:#a9c0dc;border-top:1px solid #8fa9c9;border-bottom:1px solid #d3e2f3;box-sizing:border-box"></div><div class="r" style="left:158.8px;top:122.5px;width:25px;height:25px;box-sizing:border-box;border-radius:13px;border:1.5px solid #6c8099;background:radial-gradient(circle at 50% 25%,#e6eef8 0,#c9d9ec 45%,#b4c8e0 70%,#cfdef0 100%);box-shadow:0 0 0 1px rgba(255,255,255,0.45)"></div><div class="r" style="left:186.7px;top:122.5px;width:25px;height:25px;box-sizing:border-box;border-radius:13px;border:1.5px solid #6c8099;background:radial-gradient(circle at 50% 25%,#e6eef8 0,#c9d9ec 45%,#b4c8e0 70%,#cfdef0 100%);box-shadow:0 0 0 1px rgba(255,255,255,0.45)"></div><svg class="r" style="left:162px;top:127.5px;" width="18" height="15"><path d="M1.5 7.5l6.5-6v3.5h8v5h-8v3.5z" fill="#eef4fb" stroke="#c3d2e4" stroke-width="0.8"/></svg><svg class="r" style="left:190.5px;top:127.5px;" width="18" height="15"><path d="M16.5 7.5l-6.5-6v3.5h-8v5h8v3.5z" fill="#eef4fb" stroke="#c3d2e4" stroke-width="0.8"/></svg><svg class="r" style="left:215.5px;top:133px;" width="9" height="6"><path d="M0.5 0.5h8l-4 5z" fill="#d6e2f0" stroke="#93a9c6" stroke-width="0.8"/></svg><div class="r" style="left:227px;top:124px;width:664px;height:22px;box-sizing:border-box;border:1px solid #8c9db6;border-top-color:#5e6f88;border-radius:2px;background:#e9f0fa;box-shadow:0 0 0 1px rgba(255,255,255,0.35)"></div><div class="r" style="left:865px;top:125px;width:1px;height:20px;background:#8c9db6;"></div><svg class="r" style="left:231px;top:127px;" width="13" height="16" viewBox="0 0 13.5 16"><defs><linearGradient id="faa" x1="0" y1="0" x2="1" y2="0"><stop offset="0" stop-color="#f3df86"/><stop offset="0.35" stop-color="#fdf7cc"/><stop offset="1" stop-color="#ecd06a"/></linearGradient><linearGradient id="foa" x1="0" y1="0" x2="1" y2="0"><stop offset="0" stop-color="#fdf6c6"/><stop offset="0.3" stop-color="#f6e391"/><stop offset="1" stop-color="#e2bb48"/></linearGradient></defs><path d="M0.4 2Q0.4 0.6 2 0.5L5.8 0.3V14.6L0.4 15.4z" fill="url(#faa)" stroke="#dcb84e" stroke-width="0.5"/><path d="M5.8 0.7L11 0.4Q12.2 0.4 12.3 1.8L13 7V14L7.6 15.6L5.8 14.6z" fill="url(#foa)" stroke="#d6b046" stroke-width="0.5"/><rect x="11.3" y="9.6" width="1" height="2.3" rx="0.4" fill="#4aa3e0"/></svg><div class="t" style="left:251px;top:124.5px;height:20px;line-height:20px;font-size:12px;color:#000000;">«</div><div class="t" style="left:267.4px;top:125.2px;height:20px;line-height:20px;font-size:11.9px;color:#000000;letter-spacing:-0.243px;">Terra117 (D:)</div><div class="t" style="left:357.2px;top:125.2px;height:20px;line-height:20px;font-size:11.9px;color:#000000;letter-spacing:-0.043px;">Пользователи</div><div class="t" style="left:458.1px;top:125.2px;height:20px;line-height:20px;font-size:11.9px;color:#000000;letter-spacing:0.168px;">Общие</div><div class="t" style="left:521.6px;top:125.2px;height:20px;line-height:20px;font-size:11.9px;color:#000000;letter-spacing:0.027px;">Общие документы</div><div class="t" style="left:648.2px;top:125.2px;height:20px;line-height:20px;font-size:11.9px;color:#000000;letter-spacing:-1.134px;">CLO</div><div class="t" style="left:694.2px;top:125.2px;height:20px;line-height:20px;font-size:11.9px;color:#000000;letter-spacing:-0.622px;">Assets</div><svg class="r" style="left:343.5px;top:132px;" width="5" height="8"><path d="M0.3 0.3v7.4l4.2-3.7z" fill="#000"/></svg><svg class="r" style="left:444.5px;top:132px;" width="5" height="8"><path d="M0.3 0.3v7.4l4.2-3.7z" fill="#000"/></svg><svg class="r" style="left:507.8px;top:132px;" width="5" height="8"><path d="M0.3 0.3v7.4l4.2-3.7z" fill="#000"/></svg><svg class="r" style="left:635.2px;top:132px;" width="5" height="8"><path d="M0.3 0.3v7.4l4.2-3.7z" fill="#000"/></svg><svg class="r" style="left:681.3px;top:132px;" width="5" height="8"><path d="M0.3 0.3v7.4l4.2-3.7z" fill="#000"/></svg><svg class="r" style="left:737px;top:132px;" width="5" height="8"><path d="M0.3 0.3v7.4l4.2-3.7z" fill="#000"/></svg><svg class="r" style="left:851.7px;top:133.5px;" width="8" height="5"><path d="M0 0.3h7.6L3.8 4.6z" fill="#15206a"/></svg><svg class="r" style="left:870px;top:128px;" width="16" height="15"><path d="M2 6.5C3 3 6 2 8.5 3.5L10 1.5v5.5H5l1.8-1.8C5.5 4 4 5 3.5 7z" fill="#2b6fc7"/><path d="M14 8.5C13 12 10 13 7.5 11.5L6 13.5V8h5l-1.8 1.8c1.3 1.2 2.8.200 3.3-1.8z" fill="#2b6fc7"/></svg><div class="r" style="left:897px;top:124px;width:202px;height:22px;box-sizing:border-box;border:1px solid #8c9db6;border-top-color:#5e6f88;border-radius:2px;background:#e9f0fa;box-shadow:0 0 0 1px rgba(255,255,255,0.35)"></div><div class="t" style="left:905.8px;top:125.2px;height:20px;line-height:20px;font-size:11.9px;color:#6c6c6c;letter-spacing:-0.354px;font-style:italic;">Поиск: Assets</div><svg class="r" style="left:1079px;top:128px;" width="14" height="14"><circle cx="8.5" cy="5.3" r="3.6" fill="#eaf2fb" stroke="#2e6fc0" stroke-width="1.6"/><path d="M6 8l-4 4.5" stroke="#274f9a" stroke-width="2.2"/></svg><div class="r" style="left:156px;top:154px;width:944px;height:30px;box-sizing:border-box;border-top:1px solid #fdfeff;border-bottom:1px solid #9eadc2;background:linear-gradient(#f6fafd 0,#ebf2fa 48%,#dde7f4 52%,#dae5f3 100%)"></div><div class="t" style="left:174px;top:158.5px;height:20px;line-height:20px;font-size:11.9px;color:#1e395b;letter-spacing:0.099px;">Упорядочить</div><svg class="r" style="left:251.5px;top:166.5px;" width="8" height="5"><path d="M0 0.3h7.6L3.8 4.6z" fill="#1e395b"/></svg><div class="t" style="left:290px;top:158.5px;height:20px;line-height:20px;font-size:11.9px;color:#1e395b;letter-spacing:-0.066px;">Новая папка</div><svg class="r" style="left:1006px;top:161px;" width="16" height="16"><rect x="0.5" y="1" width="3.5" height="3.5" fill="#fff" stroke="#9aa8ba" stroke-width="0.7"/><rect x="1.7" y="2.2" width="1.1" height="1.1" fill="#5a8ad0"/><path d="M6 2.7h3.5M11 2.7h4" stroke="#3b3b3b" stroke-width="1.1"/><rect x="0.5" y="6" width="3.5" height="3.5" fill="#fff" stroke="#9aa8ba" stroke-width="0.7"/><rect x="1.7" y="7.2" width="1.1" height="1.1" fill="#e04a3a"/><path d="M6 7.7h3.5M11 7.7h4" stroke="#3b3b3b" stroke-width="1.1"/><rect x="0.5" y="11" width="3.5" height="3.5" fill="#fff" stroke="#9aa8ba" stroke-width="0.7"/><rect x="1.7" y="12.2" width="1.1" height="1.1" fill="#5a8ad0"/><path d="M6 12.7h3.5M11 12.7h4" stroke="#3b3b3b" stroke-width="1.1"/></svg><svg class="r" style="left:1031.5px;top:166.5px;" width="8" height="5"><path d="M0 0.3h7.6L3.8 4.6z" fill="#1e395b"/></svg><div class="r" style="left:1069px;top:161px;width:16px;height:16px;border-radius:8px;box-sizing:border-box;border:1px solid #6a7f9a;background:radial-gradient(circle at 50% 30%,#5a84d8 0,#2a4fb0 60%,#1b3a94 100%);box-shadow:0 0 0 1px rgba(255,255,255,0.6),inset 0 0 0 1px rgba(255,255,255,0.35)"></div><div class="t" style="left:1073.3px;top:159.3px;height:20px;line-height:20px;font-size:12px;color:#fff;font-weight:bold;">?</div><div class="r" style="left:156px;top:184px;width:944px;height:320px;background:#fcfcfc;"></div><div class="r" style="left:417.5px;top:184px;width:16.5px;height:320px;background:#f1f1f1;"></div><div class="r" style="left:417.5px;top:184px;width:0.8px;height:320px;background:#e6e6e6;"></div><svg class="r" style="left:422px;top:191.5px;" width="8" height="5"><path d="M0 4.6h7.6L3.8 0.3z" fill="#505050"/></svg><svg class="r" style="left:422px;top:493px;" width="8" height="5"><path d="M0 0.3h7.6L3.8 4.6z" fill="#505050"/></svg><div class="r" style="left:418px;top:203px;width:15.5px;height:140px;box-sizing:border-box;border:1px solid #989898;border-radius:2.5px;background:linear-gradient(90deg,#f8f8f8 0,#ececec 45%,#dcdcdc 55%,#d6d6d6 100%)"></div><div class="r" style="left:422px;top:270.5px;width:8px;height:1px;background:#6e6e6e;"></div><div class="r" style="left:422px;top:273px;width:8px;height:1px;background:#6e6e6e;"></div><div class="r" style="left:422px;top:275.5px;width:8px;height:1px;background:#6e6e6e;"></div><div class="r" style="left:435.5px;top:184px;width:1px;height:320px;background:#d9e6f5;"></div><div class="r" style="left:156px;top:184px;width:262px;height:320px;overflow:hidden"><div style="position:absolute;left:-156px;top:-184px"><svg class="r" style="left:176px;top:195.8px;" width="16" height="16.5"><path d="M8 0.6l2.3 4.9 5.3.700-3.9 3.6 1 5.3L8 12.5 3.3 15.1l1-5.3L0.4 6.2l5.3-.700z" fill="#fdd04a" stroke="#ee8d1c" stroke-width="1.1" stroke-linejoin="round"/><path d="M8 3.2l1.5 3.2 3.4.500-2.5 2.3 .600 3.4L8 11l-3 1.6 .600-3.4-2.5-2.3 3.4-.500z" fill="#fee48a"/></svg><div class="t" style="left:197px;top:194.4px;height:20px;line-height:20px;font-size:11.9px;color:#000000;letter-spacing:0.086px;">Избранное</div><svg class="r" style="left:186.3px;top:216.8px;" width="16" height="16.5"><path d="M0.5 2L5.5 0.5V14L0.5 15z" fill="#efd777" stroke="#d4b24a" stroke-width="0.4"/><path d="M5 1L11.5 0.7V13.5L7 15L5 14.2z" fill="#f3dc83" stroke="#d2ae45" stroke-width="0.4"/><path d="M5.7 1.4l1.5-.200V14.4l-1.5-.500z" fill="#fbf3c8"/><path d="M9.3 6.5h4v3.7h2.2l-4.2 4.8-4.2-4.8h2.2z" fill="#3a9bea" stroke="#1668b8" stroke-width="0.7"/><path d="M10 7.2h1.3v3.8h-1.3z" fill="#8fcbf8"/></svg><div class="t" style="left:207.1px;top:215.4px;height:20px;line-height:20px;font-size:11.9px;color:#000000;letter-spacing:0.158px;">Загрузки</div><svg class="r" style="left:186.3px;top:237.8px;" width="16" height="16.5"><rect x="3" y="3" width="11" height="9" fill="#e9eef3" stroke="#8c949c" stroke-width="0.8"/><rect x="5" y="5" width="7" height="5" fill="#b9d6ee"/><path d="M1.5 13h13.5l1 2.5H0.5z" fill="#b9bec4"/><circle cx="3.5" cy="3.5" r="3" fill="#fff" stroke="#7c858e" stroke-width="0.8"/><path d="M3.5 1.8v1.9h1.5" fill="none" stroke="#555" stroke-width="0.7"/></svg><div class="t" style="left:207.1px;top:236.4px;height:20px;line-height:20px;font-size:11.9px;color:#000000;letter-spacing:-0.243px;">Недавние места</div><svg class="r" style="left:186.3px;top:258.8px;" width="16" height="16.5"><circle cx="8" cy="8" r="7.8" fill="#1877e0"/><path d="M3.2 11.5a2.6 2.6 0 0 1 .300-5.1 3.9 3.9 0 0 1 7.3-.700 3 3 0 0 1 1.7 5.8z" fill="#ffa930"/><path d="M1.5 12.5h13a7.8 7.8 0 0 1-13 0z" fill="#0a4aa6"/></svg><div class="t" style="left:207.1px;top:257.4px;height:20px;line-height:20px;font-size:11.9px;color:#000000;letter-spacing:0.022px;">Mail.Ru Cloud</div><svg class="r" style="left:186.3px;top:279.8px;" width="16" height="16.5"><path d="M5.3 3.3a4.7 4.7 0 0 0 0 9.4h5.4a4.7 4.7 0 0 0 0-9.4z" fill="#fff" stroke="#e0181f" stroke-width="1.9"/><circle cx="10.4" cy="8" r="2.3" fill="none" stroke="#e0181f" stroke-width="1.5"/><path d="M7.6 6a2.3 2.3 0 1 0 0 4" fill="none" stroke="#e0181f" stroke-width="1.5"/></svg><div class="t" style="left:207.1px;top:278.4px;height:20px;line-height:20px;font-size:11.9px;color:#000000;letter-spacing:-0.165px;">Creative Cloud Files</div><svg class="r" style="left:186.3px;top:300.8px;" width="16" height="16.5"><rect x="0.5" y="2" width="15" height="11.5" fill="#1e63c4" stroke="#4a4f57" stroke-width="0.8"/><path d="M1 2.5h14v5c-5 0-9 2-14 4.5z" fill="#4d9bf0" opacity="0.75"/><rect x="0.5" y="11.5" width="15" height="2" fill="#2b2f36"/><circle cx="2.8" cy="11.3" r="1.3" fill="#f0b428"/></svg><div class="t" style="left:207.1px;top:299.4px;height:20px;line-height:20px;font-size:11.9px;color:#000000;letter-spacing:0.163px;">Рабочий стол</div><svg class="r" style="left:176px;top:343.5px;" width="16" height="16.5"><rect x="0.5" y="2" width="15" height="11.5" fill="#1e63c4" stroke="#4a4f57" stroke-width="0.8"/><path d="M1 2.5h14v5c-5 0-9 2-14 4.5z" fill="#4d9bf0" opacity="0.75"/><rect x="0.5" y="11.5" width="15" height="2" fill="#2b2f36"/><circle cx="2.8" cy="11.3" r="1.3" fill="#f0b428"/></svg><div class="t" style="left:197px;top:342.1px;height:20px;line-height:20px;font-size:11.9px;color:#000000;letter-spacing:0.163px;">Рабочий стол</div><svg class="r" style="left:186.3px;top:364.5px;" width="16" height="16.5"><path d="M1 3h5l1 1.5h8V14H1z" fill="#f3d873" stroke="#cda83a" stroke-width="0.6"/><path d="M1 6.5h14V14H1z" fill="#f8e8a0"/><path d="M4 14v-4a1 1 0 0 1 1-1h6a1 1 0 0 1 1 1v4" fill="#9fd0f4" stroke="#3c8fd8" stroke-width="1.3"/><rect x="2" y="1.8" width="2.5" height="1.2" fill="#7cc14a"/></svg><div class="t" style="left:207.1px;top:363.1px;height:20px;line-height:20px;font-size:11.9px;color:#000000;letter-spacing:0.169px;">Библиотеки</div><svg class="r" style="left:196.6px;top:385.5px;" width="16" height="16.5"><rect x="0.5" y="1" width="15" height="14.5" fill="#2e3a46"/><rect x="3.5" y="2" width="9" height="5.5" fill="#d8583a"/><rect x="3.5" y="8.5" width="9" height="6" fill="#3b8fd0"/><path d="M3.5 7l4-3 5 3z" fill="#f0a848"/><path d="M1.2 2.5h1.2M1.2 5h1.2M1.2 7.5h1.2M1.2 10h1.2M1.2 12.5h1.2M13.6 2.5h1.2M13.6 5h1.2M13.6 7.5h1.2M13.6 10h1.2M13.6 12.5h1.2" stroke="#dfe6ec" stroke-width="1.2"/></svg><div class="t" style="left:217.2px;top:384.1px;height:20px;line-height:20px;font-size:11.9px;color:#000000;letter-spacing:-0.441px;">Видео</div><svg class="r" style="left:196.6px;top:406.5px;" width="16" height="16.5"><path d="M2 0.5h8l4 4V15.5H2z" fill="#fdfdfd" stroke="#8e969e" stroke-width="0.8"/><path d="M10 0.5v4h4" fill="#e3e8ee" stroke="#8e969e" stroke-width="0.8"/><path d="M4 6h5M4 8h5M4 10h8M4 12h8" stroke="#8aa6d6" stroke-width="0.8"/><rect x="9" y="5.8" width="3.5" height="3" fill="#3f7fd0"/></svg><div class="t" style="left:217.2px;top:405.1px;height:20px;line-height:20px;font-size:11.9px;color:#000000;letter-spacing:0.207px;">Документы</div><svg class="r" style="left:196.6px;top:427.5px;" width="16" height="16.5"><rect x="0.5" y="2" width="15.5" height="12.5" fill="#fafafa" stroke="#8b9299" stroke-width="0.8"/><rect x="2" y="3.5" width="12.5" height="9.5" fill="#3aa0e8"/><path d="M2 9c4-2.5 8-2.5 12.5-.500V13H2z" fill="#2f8f5a"/><path d="M2 11c4-1 8-1 12.5.500V13H2z" fill="#1d5fa8"/></svg><div class="t" style="left:217.2px;top:426.1px;height:20px;line-height:20px;font-size:11.9px;color:#000000;letter-spacing:0.121px;">Изображения</div><svg class="r" style="left:196.6px;top:448.5px;" width="16" height="16.5"><path d="M7 1c4 1 6 3.5 5 8-0.5-3-2.5-4.5-3.7-4.7V12.5A3.2 3 0 1 1 7 10z" fill="#2f8de4" stroke="#1b64b8" stroke-width="0.6"/></svg><div class="t" style="left:217.2px;top:447.1px;height:20px;line-height:20px;font-size:11.9px;color:#000000;letter-spacing:0.181px;">Музыка</div><svg class="r" style="left:186.3px;top:469.5px;" width="16" height="16.5"><circle cx="4" cy="9" r="3.2" fill="#2a66c8"/><circle cx="11" cy="4" r="3" fill="#2a66c8"/><circle cx="12" cy="12" r="3.3" fill="#2a66c8"/><circle cx="8" cy="8" r="3.6" fill="#52b043"/><circle cx="7" cy="7" r="1.3" fill="#b9ec9c"/><circle cx="3.3" cy="8.2" r="1" fill="#a9c8f4"/><circle cx="10.3" cy="3.2" r="1" fill="#a9c8f4"/><circle cx="11.3" cy="11.2" r="1" fill="#a9c8f4"/></svg><div class="t" style="left:207.1px;top:468.1px;height:20px;line-height:20px;font-size:11.9px;color:#000000;letter-spacing:0.2px;">Домашняя группа</div><svg class="r" style="left:186.3px;top:490.5px;" width="16" height="16.5"><path d="M1 2L6 0.8V14l-5 .800z" fill="#efd777"/><path d="M6 1.2l7-.400v12.7L8 15l-2-.800z" fill="#ecd06a"/><circle cx="10.5" cy="7" r="2.4" fill="#6b4b3a"/><path d="M6.5 15c0-4 2-5 4-5s4 1 4 5z" fill="#3f9f6c"/><circle cx="10.5" cy="7.4" r="1.7" fill="#f0c8a0"/></svg><div class="t" style="left:207.1px;top:489.1px;height:20px;line-height:20px;font-size:11.9px;color:#000000;letter-spacing:0.281px;">ArhiMed</div></div></div><div class="t" style="left:454.3px;top:188px;height:20px;line-height:20px;font-size:11.9px;color:#4c607a;letter-spacing:-0.339px;">Имя</div><div class="t" style="left:714.6px;top:188px;height:20px;line-height:20px;font-size:11.9px;color:#4c607a;letter-spacing:-0.109px;">Дата изменения</div><div class="t" style="left:835.5px;top:188px;height:20px;line-height:20px;font-size:11.9px;color:#4c607a;letter-spacing:0.331px;">Тип</div><div class="t" style="left:955px;top:188px;height:20px;line-height:20px;font-size:11.9px;color:#4c607a;letter-spacing:-0.18px;">Размер</div><div class="r" style="left:708.6px;top:185px;width:1px;height:23px;background:linear-gradient(#fcfcfc,#dfe5ee 50%,#fcfcfc)"></div><div class="r" style="left:828.3px;top:185px;width:1px;height:23px;background:linear-gradient(#fcfcfc,#dfe5ee 50%,#fcfcfc)"></div><div class="r" style="left:948.3px;top:185px;width:1px;height:23px;background:linear-gradient(#fcfcfc,#dfe5ee 50%,#fcfcfc)"></div><div class="r" style="left:1028.3px;top:185px;width:1px;height:23px;background:linear-gradient(#fcfcfc,#dfe5ee 50%,#fcfcfc)"></div><svg class="r" style="left:573.5px;top:186px;" width="9" height="5"><path d="M0.5 4.5L4.5 0.8L8.5 4.5" fill="#c8dcf0" stroke="#5a86b8" stroke-width="0.9"/></svg><svg class="r" style="left:456px;top:218px;" width="13.5" height="16" viewBox="0 0 13.5 16"><defs><linearGradient id="far0" x1="0" y1="0" x2="1" y2="0"><stop offset="0" stop-color="#f3df86"/><stop offset="0.35" stop-color="#fdf7cc"/><stop offset="1" stop-color="#ecd06a"/></linearGradient><linearGradient id="for0" x1="0" y1="0" x2="1" y2="0"><stop offset="0" stop-color="#fdf6c6"/><stop offset="0.3" stop-color="#f6e391"/><stop offset="1" stop-color="#e2bb48"/></linearGradient></defs><path d="M0.4 2Q0.4 0.6 2 0.5L5.8 0.3V14.6L0.4 15.4z" fill="url(#far0)" stroke="#dcb84e" stroke-width="0.5"/><path d="M5.8 0.7L11 0.4Q12.2 0.4 12.3 1.8L13 7V14L7.6 15.6L5.8 14.6z" fill="url(#for0)" stroke="#d6b046" stroke-width="0.5"/><rect x="11.3" y="9.6" width="1" height="2.3" rx="0.4" fill="#4aa3e0"/></svg><div class="t" style="left:475.4px;top:216.7px;height:20px;line-height:20px;font-size:11.9px;color:#000000;letter-spacing:-0.131px;">Autosave</div><div class="t" style="left:714.6px;top:216.7px;height:20px;line-height:20px;font-size:11.9px;color:#6d6d6d;letter-spacing:-0.543px;">15.10.2020 18:47</div><div class="t" style="left:835.5px;top:216.7px;height:20px;line-height:20px;font-size:11.9px;color:#6d6d6d;letter-spacing:-0.086px;">Папка с файлами</div><svg class="r" style="left:456px;top:239px;" width="13.5" height="16" viewBox="0 0 13.5 16"><defs><linearGradient id="far1" x1="0" y1="0" x2="1" y2="0"><stop offset="0" stop-color="#f3df86"/><stop offset="0.35" stop-color="#fdf7cc"/><stop offset="1" stop-color="#ecd06a"/></linearGradient><linearGradient id="for1" x1="0" y1="0" x2="1" y2="0"><stop offset="0" stop-color="#fdf6c6"/><stop offset="0.3" stop-color="#f6e391"/><stop offset="1" stop-color="#e2bb48"/></linearGradient></defs><path d="M0.4 2Q0.4 0.6 2 0.5L5.8 0.3V14.6L0.4 15.4z" fill="url(#far1)" stroke="#dcb84e" stroke-width="0.5"/><path d="M5.8 0.7L11 0.4Q12.2 0.4 12.3 1.8L13 7V14L7.6 15.6L5.8 14.6z" fill="url(#for1)" stroke="#d6b046" stroke-width="0.5"/><rect x="11.3" y="9.6" width="1" height="2.3" rx="0.4" fill="#4aa3e0"/></svg><div class="t" style="left:475.4px;top:237.7px;height:20px;line-height:20px;font-size:11.9px;color:#000000;letter-spacing:-0.116px;">Avatar</div><div class="t" style="left:714.6px;top:237.7px;height:20px;line-height:20px;font-size:11.9px;color:#6d6d6d;letter-spacing:-0.538px;">02.10.2020 8:52</div><div class="t" style="left:835.5px;top:237.7px;height:20px;line-height:20px;font-size:11.9px;color:#6d6d6d;letter-spacing:-0.086px;">Папка с файлами</div><svg class="r" style="left:456px;top:260px;" width="13.5" height="16" viewBox="0 0 13.5 16"><defs><linearGradient id="far2" x1="0" y1="0" x2="1" y2="0"><stop offset="0" stop-color="#f3df86"/><stop offset="0.35" stop-color="#fdf7cc"/><stop offset="1" stop-color="#ecd06a"/></linearGradient><linearGradient id="for2" x1="0" y1="0" x2="1" y2="0"><stop offset="0" stop-color="#fdf6c6"/><stop offset="0.3" stop-color="#f6e391"/><stop offset="1" stop-color="#e2bb48"/></linearGradient></defs><path d="M0.4 2Q0.4 0.6 2 0.5L5.8 0.3V14.6L0.4 15.4z" fill="url(#far2)" stroke="#dcb84e" stroke-width="0.5"/><path d="M5.8 0.7L11 0.4Q12.2 0.4 12.3 1.8L13 7V14L7.6 15.6L5.8 14.6z" fill="url(#for2)" stroke="#d6b046" stroke-width="0.5"/><rect x="11.3" y="9.6" width="1" height="2.3" rx="0.4" fill="#4aa3e0"/></svg><div class="t" style="left:475.4px;top:258.7px;height:20px;line-height:20px;font-size:11.9px;color:#000000;letter-spacing:-0.29px;">Blocks</div><div class="t" style="left:714.6px;top:258.7px;height:20px;line-height:20px;font-size:11.9px;color:#6d6d6d;letter-spacing:-0.538px;">02.10.2020 8:52</div><div class="t" style="left:835.5px;top:258.7px;height:20px;line-height:20px;font-size:11.9px;color:#6d6d6d;letter-spacing:-0.086px;">Папка с файлами</div><svg class="r" style="left:456px;top:281px;" width="13.5" height="16" viewBox="0 0 13.5 16"><defs><linearGradient id="far3" x1="0" y1="0" x2="1" y2="0"><stop offset="0" stop-color="#f3df86"/><stop offset="0.35" stop-color="#fdf7cc"/><stop offset="1" stop-color="#ecd06a"/></linearGradient><linearGradient id="for3" x1="0" y1="0" x2="1" y2="0"><stop offset="0" stop-color="#fdf6c6"/><stop offset="0.3" stop-color="#f6e391"/><stop offset="1" stop-color="#e2bb48"/></linearGradient></defs><path d="M0.4 2Q0.4 0.6 2 0.5L5.8 0.3V14.6L0.4 15.4z" fill="url(#far3)" stroke="#dcb84e" stroke-width="0.5"/><path d="M5.8 0.7L11 0.4Q12.2 0.4 12.3 1.8L13 7V14L7.6 15.6L5.8 14.6z" fill="url(#for3)" stroke="#d6b046" stroke-width="0.5"/><rect x="11.3" y="9.6" width="1" height="2.3" rx="0.4" fill="#4aa3e0"/></svg><div class="t" style="left:475.4px;top:279.7px;height:20px;line-height:20px;font-size:11.9px;color:#000000;letter-spacing:-0.132px;">Garment</div><div class="t" style="left:714.6px;top:279.7px;height:20px;line-height:20px;font-size:11.9px;color:#6d6d6d;letter-spacing:-0.543px;">14.10.2020 20:28</div><div class="t" style="left:835.5px;top:279.7px;height:20px;line-height:20px;font-size:11.9px;color:#6d6d6d;letter-spacing:-0.086px;">Папка с файлами</div><svg class="r" style="left:456px;top:302px;" width="13.5" height="16" viewBox="0 0 13.5 16"><defs><linearGradient id="far4" x1="0" y1="0" x2="1" y2="0"><stop offset="0" stop-color="#f3df86"/><stop offset="0.35" stop-color="#fdf7cc"/><stop offset="1" stop-color="#ecd06a"/></linearGradient><linearGradient id="for4" x1="0" y1="0" x2="1" y2="0"><stop offset="0" stop-color="#fdf6c6"/><stop offset="0.3" stop-color="#f6e391"/><stop offset="1" stop-color="#e2bb48"/></linearGradient></defs><path d="M0.4 2Q0.4 0.6 2 0.5L5.8 0.3V14.6L0.4 15.4z" fill="url(#far4)" stroke="#dcb84e" stroke-width="0.5"/><path d="M5.8 0.7L11 0.4Q12.2 0.4 12.3 1.8L13 7V14L7.6 15.6L5.8 14.6z" fill="url(#for4)" stroke="#d6b046" stroke-width="0.5"/><rect x="11.3" y="9.6" width="1" height="2.3" rx="0.4" fill="#4aa3e0"/></svg><div class="t" style="left:475.4px;top:300.7px;height:20px;line-height:20px;font-size:11.9px;color:#000000;letter-spacing:0.037px;">Garment_Information</div><div class="t" style="left:714.6px;top:300.7px;height:20px;line-height:20px;font-size:11.9px;color:#6d6d6d;letter-spacing:-0.538px;">02.10.2020 8:53</div><div class="t" style="left:835.5px;top:300.7px;height:20px;line-height:20px;font-size:11.9px;color:#6d6d6d;letter-spacing:-0.086px;">Папка с файлами</div><svg class="r" style="left:456px;top:323px;" width="13.5" height="16" viewBox="0 0 13.5 16"><defs><linearGradient id="far5" x1="0" y1="0" x2="1" y2="0"><stop offset="0" stop-color="#f3df86"/><stop offset="0.35" stop-color="#fdf7cc"/><stop offset="1" stop-color="#ecd06a"/></linearGradient><linearGradient id="for5" x1="0" y1="0" x2="1" y2="0"><stop offset="0" stop-color="#fdf6c6"/><stop offset="0.3" stop-color="#f6e391"/><stop offset="1" stop-color="#e2bb48"/></linearGradient></defs><path d="M0.4 2Q0.4 0.6 2 0.5L5.8 0.3V14.6L0.4 15.4z" fill="url(#far5)" stroke="#dcb84e" stroke-width="0.5"/><path d="M5.8 0.7L11 0.4Q12.2 0.4 12.3 1.8L13 7V14L7.6 15.6L5.8 14.6z" fill="url(#for5)" stroke="#d6b046" stroke-width="0.5"/><rect x="11.3" y="9.6" width="1" height="2.3" rx="0.4" fill="#4aa3e0"/></svg><div class="t" style="left:475.4px;top:321.7px;height:20px;line-height:20px;font-size:11.9px;color:#000000;letter-spacing:-0.072px;">Materials</div><div class="t" style="left:714.6px;top:321.7px;height:20px;line-height:20px;font-size:11.9px;color:#6d6d6d;letter-spacing:-0.543px;">14.10.2020 20:00</div><div class="t" style="left:835.5px;top:321.7px;height:20px;line-height:20px;font-size:11.9px;color:#6d6d6d;letter-spacing:-0.086px;">Папка с файлами</div><svg class="r" style="left:456px;top:344px;" width="13.5" height="16" viewBox="0 0 13.5 16"><defs><linearGradient id="far6" x1="0" y1="0" x2="1" y2="0"><stop offset="0" stop-color="#f3df86"/><stop offset="0.35" stop-color="#fdf7cc"/><stop offset="1" stop-color="#ecd06a"/></linearGradient><linearGradient id="for6" x1="0" y1="0" x2="1" y2="0"><stop offset="0" stop-color="#fdf6c6"/><stop offset="0.3" stop-color="#f6e391"/><stop offset="1" stop-color="#e2bb48"/></linearGradient></defs><path d="M0.4 2Q0.4 0.6 2 0.5L5.8 0.3V14.6L0.4 15.4z" fill="url(#far6)" stroke="#dcb84e" stroke-width="0.5"/><path d="M5.8 0.7L11 0.4Q12.2 0.4 12.3 1.8L13 7V14L7.6 15.6L5.8 14.6z" fill="url(#for6)" stroke="#d6b046" stroke-width="0.5"/><rect x="11.3" y="9.6" width="1" height="2.3" rx="0.4" fill="#4aa3e0"/></svg><div class="t" style="left:475.4px;top:342.7px;height:20px;line-height:20px;font-size:11.9px;color:#000000;letter-spacing:-0.175px;">Palette</div><div class="t" style="left:714.6px;top:342.7px;height:20px;line-height:20px;font-size:11.9px;color:#6d6d6d;letter-spacing:-0.538px;">02.10.2020 8:53</div><div class="t" style="left:835.5px;top:342.7px;height:20px;line-height:20px;font-size:11.9px;color:#6d6d6d;letter-spacing:-0.086px;">Папка с файлами</div><svg class="r" style="left:456px;top:365px;" width="13.5" height="16" viewBox="0 0 13.5 16"><defs><linearGradient id="far7" x1="0" y1="0" x2="1" y2="0"><stop offset="0" stop-color="#f3df86"/><stop offset="0.35" stop-color="#fdf7cc"/><stop offset="1" stop-color="#ecd06a"/></linearGradient><linearGradient id="for7" x1="0" y1="0" x2="1" y2="0"><stop offset="0" stop-color="#fdf6c6"/><stop offset="0.3" stop-color="#f6e391"/><stop offset="1" stop-color="#e2bb48"/></linearGradient></defs><path d="M0.4 2Q0.4 0.6 2 0.5L5.8 0.3V14.6L0.4 15.4z" fill="url(#far7)" stroke="#dcb84e" stroke-width="0.5"/><path d="M5.8 0.7L11 0.4Q12.2 0.4 12.3 1.8L13 7V14L7.6 15.6L5.8 14.6z" fill="url(#for7)" stroke="#d6b046" stroke-width="0.5"/><rect x="11.3" y="9.6" width="1" height="2.3" rx="0.4" fill="#4aa3e0"/></svg><div class="t" style="left:475.4px;top:363.7px;height:20px;line-height:20px;font-size:11.9px;color:#000000;letter-spacing:-0.316px;">Preferences</div><div class="t" style="left:714.6px;top:363.7px;height:20px;line-height:20px;font-size:11.9px;color:#6d6d6d;letter-spacing:-0.538px;">02.10.2020 8:53</div><div class="t" style="left:835.5px;top:363.7px;height:20px;line-height:20px;font-size:11.9px;color:#6d6d6d;letter-spacing:-0.086px;">Папка с файлами</div><svg class="r" style="left:456px;top:386px;" width="13.5" height="16" viewBox="0 0 13.5 16"><defs><linearGradient id="far8" x1="0" y1="0" x2="1" y2="0"><stop offset="0" stop-color="#f3df86"/><stop offset="0.35" stop-color="#fdf7cc"/><stop offset="1" stop-color="#ecd06a"/></linearGradient><linearGradient id="for8" x1="0" y1="0" x2="1" y2="0"><stop offset="0" stop-color="#fdf6c6"/><stop offset="0.3" stop-color="#f6e391"/><stop offset="1" stop-color="#e2bb48"/></linearGradient></defs><path d="M0.4 2Q0.4 0.6 2 0.5L5.8 0.3V14.6L0.4 15.4z" fill="url(#far8)" stroke="#dcb84e" stroke-width="0.5"/><path d="M5.8 0.7L11 0.4Q12.2 0.4 12.3 1.8L13 7V14L7.6 15.6L5.8 14.6z" fill="url(#for8)" stroke="#d6b046" stroke-width="0.5"/><rect x="11.3" y="9.6" width="1" height="2.3" rx="0.4" fill="#4aa3e0"/></svg><div class="t" style="left:475.4px;top:384.7px;height:20px;line-height:20px;font-size:11.9px;color:#000000;letter-spacing:-0.006px;">Project</div><div class="t" style="left:714.6px;top:384.7px;height:20px;line-height:20px;font-size:11.9px;color:#6d6d6d;letter-spacing:-0.538px;">02.10.2020 8:53</div><div class="t" style="left:835.5px;top:384.7px;height:20px;line-height:20px;font-size:11.9px;color:#6d6d6d;letter-spacing:-0.086px;">Папка с файлами</div><svg class="r" style="left:456px;top:407px;" width="13.5" height="16" viewBox="0 0 13.5 16"><defs><linearGradient id="far9" x1="0" y1="0" x2="1" y2="0"><stop offset="0" stop-color="#f3df86"/><stop offset="0.35" stop-color="#fdf7cc"/><stop offset="1" stop-color="#ecd06a"/></linearGradient><linearGradient id="for9" x1="0" y1="0" x2="1" y2="0"><stop offset="0" stop-color="#fdf6c6"/><stop offset="0.3" stop-color="#f6e391"/><stop offset="1" stop-color="#e2bb48"/></linearGradient></defs><path d="M0.4 2Q0.4 0.6 2 0.5L5.8 0.3V14.6L0.4 15.4z" fill="url(#far9)" stroke="#dcb84e" stroke-width="0.5"/><path d="M5.8 0.7L11 0.4Q12.2 0.4 12.3 1.8L13 7V14L7.6 15.6L5.8 14.6z" fill="url(#for9)" stroke="#d6b046" stroke-width="0.5"/><rect x="11.3" y="9.6" width="1" height="2.3" rx="0.4" fill="#4aa3e0"/></svg><div class="t" style="left:475.4px;top:405.7px;height:20px;line-height:20px;font-size:11.9px;color:#000000;letter-spacing:-0.306px;">Render</div><div class="t" style="left:714.6px;top:405.7px;height:20px;line-height:20px;font-size:11.9px;color:#6d6d6d;letter-spacing:-0.538px;">02.10.2020 8:53</div><div class="t" style="left:835.5px;top:405.7px;height:20px;line-height:20px;font-size:11.9px;color:#6d6d6d;letter-spacing:-0.086px;">Папка с файлами</div><svg class="r" style="left:456px;top:428px;" width="13.5" height="16" viewBox="0 0 13.5 16"><defs><linearGradient id="far10" x1="0" y1="0" x2="1" y2="0"><stop offset="0" stop-color="#f3df86"/><stop offset="0.35" stop-color="#fdf7cc"/><stop offset="1" stop-color="#ecd06a"/></linearGradient><linearGradient id="for10" x1="0" y1="0" x2="1" y2="0"><stop offset="0" stop-color="#fdf6c6"/><stop offset="0.3" stop-color="#f6e391"/><stop offset="1" stop-color="#e2bb48"/></linearGradient></defs><path d="M0.4 2Q0.4 0.6 2 0.5L5.8 0.3V14.6L0.4 15.4z" fill="url(#far10)" stroke="#dcb84e" stroke-width="0.5"/><path d="M5.8 0.7L11 0.4Q12.2 0.4 12.3 1.8L13 7V14L7.6 15.6L5.8 14.6z" fill="url(#for10)" stroke="#d6b046" stroke-width="0.5"/><rect x="11.3" y="9.6" width="1" height="2.3" rx="0.4" fill="#4aa3e0"/></svg><div class="t" style="left:475.4px;top:426.7px;height:20px;line-height:20px;font-size:11.9px;color:#000000;letter-spacing:-0.525px;">Stage</div><div class="t" style="left:714.6px;top:426.7px;height:20px;line-height:20px;font-size:11.9px;color:#6d6d6d;letter-spacing:-0.538px;">02.10.2020 9:05</div><div class="t" style="left:835.5px;top:426.7px;height:20px;line-height:20px;font-size:11.9px;color:#6d6d6d;letter-spacing:-0.086px;">Папка с файлами</div><div class="r" style="left:156px;top:504px;width:944px;height:117px;background:#f0f0f0;"></div><div class="t" style="left:210.8px;top:516px;height:20px;line-height:20px;font-size:11.9px;color:#000000;letter-spacing:-0.212px;">Имя файла:</div><div class="t" style="left:213.8px;top:541px;height:20px;line-height:20px;font-size:11.9px;color:#000000;letter-spacing:-0.174px;">Тип файла:</div><div class="r" style="left:281px;top:514px;width:814px;height:22.5px;box-sizing:border-box;border:1px solid #b4d3ea;border-top-color:#3f7fb4;border-left-color:#86b3d6;border-radius:2px;background:#fff"></div><div class="t" style="left:286.3px;top:515.3px;height:20px;line-height:20px;font-size:11.9px;color:#000000;letter-spacing:0.206px;">111</div><div class="r" style="left:306px;top:518.5px;width:1px;height:14px;background:#000;"></div><svg class="r" style="left:1082.5px;top:523.5px;" width="8" height="5"><path d="M0 0.3h7.6L3.8 4.6z" fill="#000"/></svg><div class="r" style="left:281px;top:539px;width:814px;height:22.7px;box-sizing:border-box;border:1px solid #707070;border-radius:3px;background:linear-gradient(#f3f3f3 0,#ebebeb 48%,#dddddd 52%,#cfcfcf 100%);box-shadow:inset 0 0 0 1px rgba(255,255,255,0.6)"></div><div class="t" style="left:285px;top:541px;height:20px;line-height:20px;font-size:11.9px;color:#000000;letter-spacing:-0.173px;">PNG File (*.png)</div><svg class="r" style="left:1082.5px;top:548.5px;" width="8" height="5"><path d="M0 0.3h7.6L3.8 4.6z" fill="#000"/></svg><div class="r" style="left:167px;top:589.5px;width:16.5px;height:16.5px;box-sizing:border-box;border-radius:9px;border:1px solid #9aa7c0;background:radial-gradient(circle at 50% 30%,#ffffff 0,#e6ebf5 60%,#cfd8ea 100%);box-shadow:0 0 0 1px rgba(255,255,255,0.7)"></div><svg class="r" style="left:171.3px;top:595px;" width="8" height="5"><path d="M0 4.6h7.6L3.8 0.3z" fill="#24408c"/></svg><div class="t" style="left:188.3px;top:589px;height:20px;line-height:20px;font-size:11.9px;color:#000000;letter-spacing:0.101px;">Скрыть папки</div><div class="r" style="left:886px;top:584px;width:96px;height:24px;box-sizing:border-box;border:1px solid #3c7fb1;border-radius:3px;background:linear-gradient(#eaf6fd 0,#d9f0fc 48%,#bee6fd 52%,#a7d9f5 100%);box-shadow:inset 0 0 0 1px rgba(255,255,255,0.65)"></div><div class="r" style="left:996px;top:584px;width:86px;height:24px;box-sizing:border-box;border:1px solid #707070;border-radius:3px;background:linear-gradient(#f2f2f2 0,#ebebeb 48%,#dddddd 52%,#cfcfcf 100%);box-shadow:inset 0 0 0 1px rgba(255,255,255,0.65)"></div><div class="t" style="left:1018.2px;top:585.8px;height:20px;line-height:20px;font-size:11.9px;color:#000000;letter-spacing:-0.239px;">Отмена</div><svg class="r" style="left:1087px;top:610.5px;" width="12" height="10"><rect x="9" y="1" width="1.3" height="1.3" fill="#9a9a9a"/><rect x="8.2" y="0.19999999999999996" width="1" height="1" fill="#fff"/><rect x="6" y="4" width="1.3" height="1.3" fill="#9a9a9a"/><rect x="5.2" y="3.2" width="1" height="1" fill="#fff"/><rect x="9" y="4" width="1.3" height="1.3" fill="#9a9a9a"/><rect x="8.2" y="3.2" width="1" height="1" fill="#fff"/><rect x="3" y="7" width="1.3" height="1.3" fill="#9a9a9a"/><rect x="2.2" y="6.2" width="1" height="1" fill="#fff"/><rect x="6" y="7" width="1.3" height="1.3" fill="#9a9a9a"/><rect x="5.2" y="6.2" width="1" height="1" fill="#fff"/><rect x="9" y="7" width="1.3" height="1.3" fill="#9a9a9a"/><rect x="8.2" y="6.2" width="1" height="1" fill="#fff"/></svg><svg class="r" style="left:0;top:0" width="1920" height="1048"><path d="M640 406L357 516.7" stroke="#ed1c24" stroke-width="5.6" stroke-linecap="round"/><path d="M328.2 527L352.3 505.2L362 528.2z" fill="#ed1c24"/><path d="M791.2 480.5L903.5 573.7" stroke="#ed1c24" stroke-width="6.6" stroke-linecap="round"/><path d="M928.2 593.7L895.4 583.5L911.6 563.9z" fill="#ed1c24"/></svg><div class="t" style="left:905.4px;top:585.8px;height:20px;line-height:20px;font-size:11.9px;color:#000;letter-spacing:-0.242px;">Сохранить</div>
</body></html>
